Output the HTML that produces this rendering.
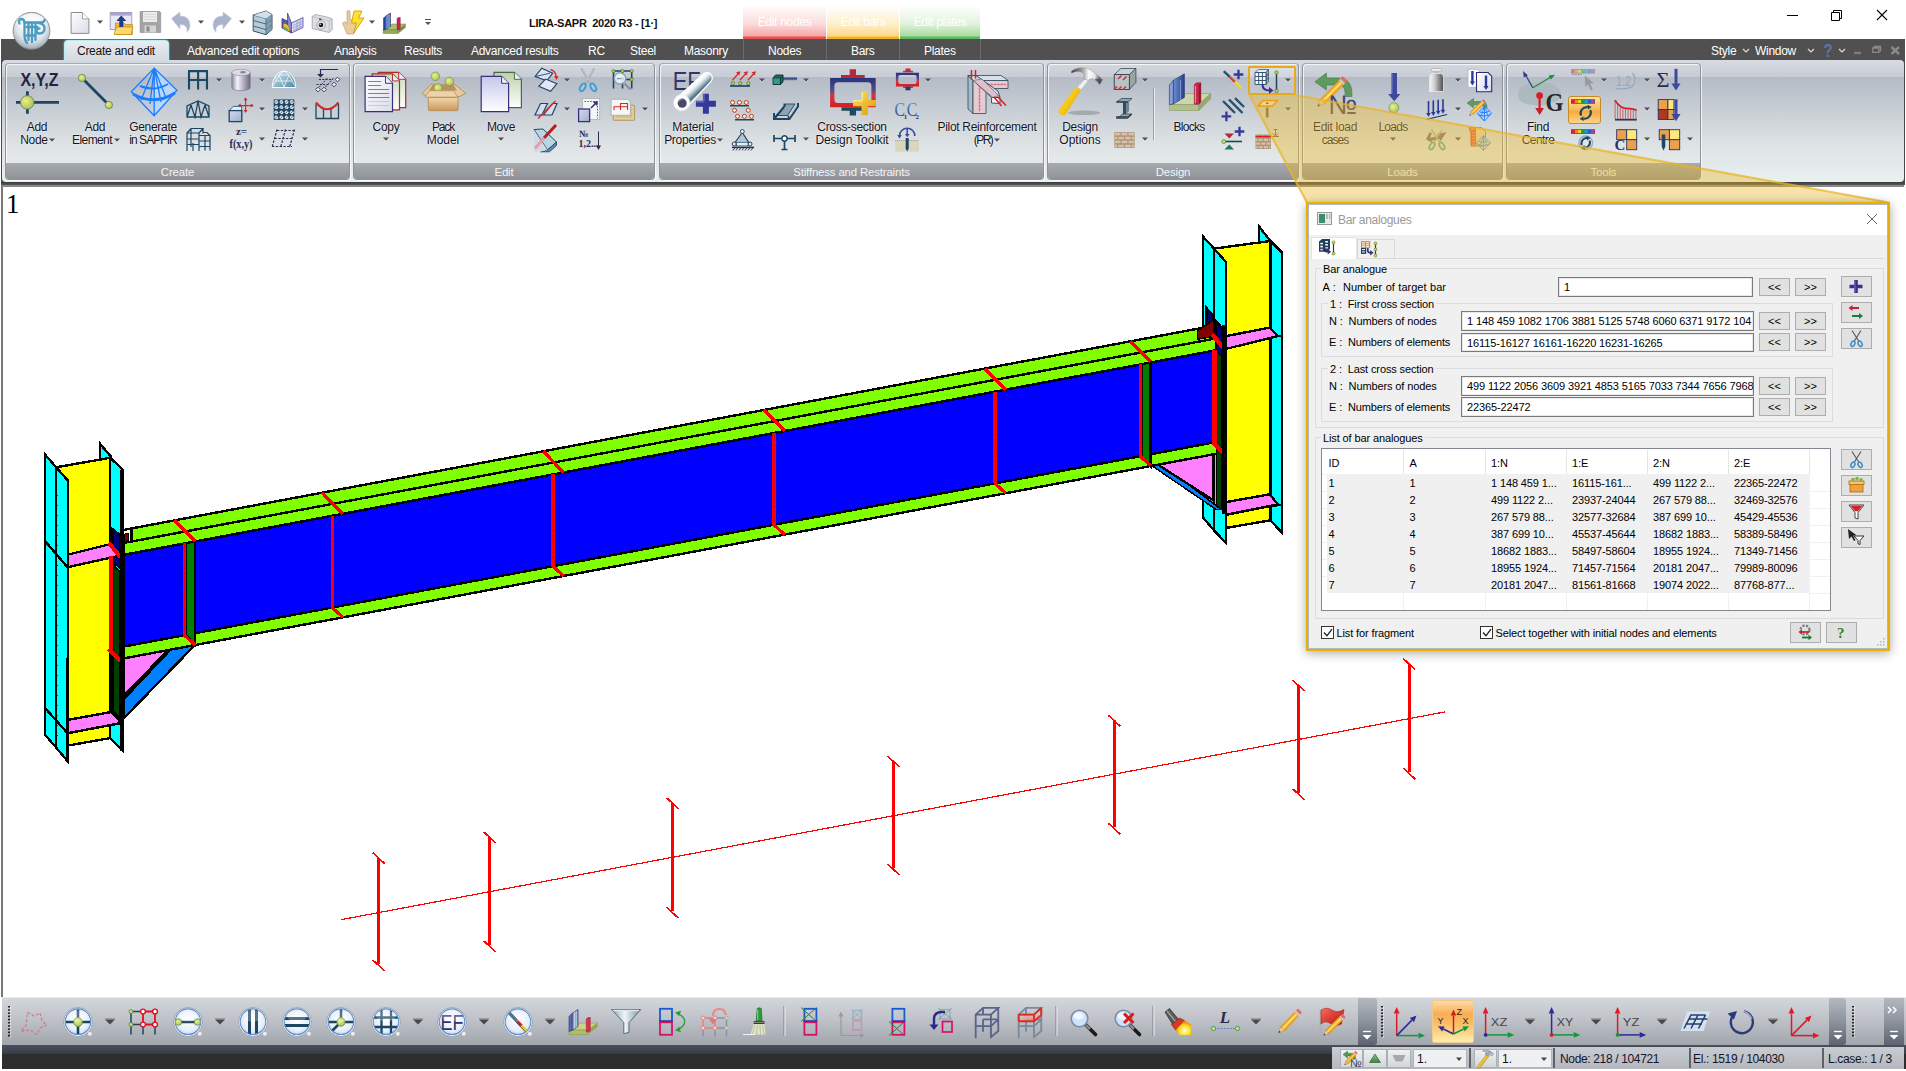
<!DOCTYPE html>
<html><head><meta charset="utf-8"><title>LIRA-SAPR 2020 R3 - [1]</title>
<style>
*{box-sizing:border-box;margin:0;padding:0}
html,body{width:1906px;height:1071px;overflow:hidden;background:#fff}
body{font-family:"Liberation Sans",sans-serif;font-size:12px;color:#1b1b1b}
#app{position:relative;width:1906px;height:1071px;overflow:hidden;background:#fff}
.abs{position:absolute}
svg{position:absolute;overflow:visible}
/* title */
#titlebar{position:absolute;left:0;top:0;width:1906px;height:39px;background:#fff}
#title{position:absolute;left:529px;top:16px;font-size:11px;font-weight:bold;letter-spacing:-0.25px;white-space:pre;color:#111;line-height:14px}
.ctx{position:absolute;top:5px;height:34px;color:#fff;font-size:12px;letter-spacing:-0.3px;text-align:center;line-height:34px;white-space:nowrap}
#tabbar{position:absolute;left:1px;top:39px;width:1904px;height:22px;background:#505050}
.tab{position:absolute;top:44.4px;height:14px;line-height:14px;font-size:12px;letter-spacing:-0.28px;color:#fff;white-space:nowrap}
#tabactive{position:absolute;left:64px;top:40px;width:105px;height:21px;border-radius:4px 4px 0 0;background:linear-gradient(#e9edf1,#d4d9df);border:1px solid #b9ecf5;border-bottom:none;box-shadow:0 0 2px #8fe0f0}
#ribbon{position:absolute;left:2px;top:60px;width:1902px;height:122px;border-radius:4px;background:linear-gradient(#d7dbe1 0px,#c7ccd5 17px,#b4bbc6 17px,#dfe3e5 86px,#e8f0f0 121px)}
#ribbonshadow{position:absolute;left:1px;top:182px;width:1904px;height:3px;background:linear-gradient(#3c3c3c,#555)}
.panel{position:absolute;top:63px;height:117px;border-radius:4px;border:1px solid #8e9399;border-top-color:#a6abb2;box-shadow:inset 1px 1px 0 rgba(255,255,255,.75),1px 1px 0 rgba(255,255,255,.7);overflow:hidden}
.plabel{position:absolute;left:0;right:0;bottom:0;height:16px;background:linear-gradient(#a7abb0,#8f9397);color:#f4f4f4;font-size:11.4px;letter-spacing:-0.15px;text-align:center;line-height:18px}
.rt{position:absolute;font-size:12px;letter-spacing:-0.3px;line-height:13px;text-align:center;white-space:nowrap;color:#14141e;transform:translateX(-50%);text-shadow:0 0 2px #fff}
.dd{position:absolute;width:0;height:0;border-left:3px solid transparent;border-right:3px solid transparent;border-top:3px solid #444}
#viewport{position:absolute;left:1px;top:185px;width:1903px;height:812px;background:#fff;border-left:2px solid #777;border-top:2px solid #8a8a8a}
#vpnum{position:absolute;left:6px;top:190px;font-family:"Liberation Serif",serif;font-size:27px;line-height:28px;color:#000}
/* dialog */
#dlg{position:absolute;left:1306px;top:202px;width:584px;height:449px;border:2px solid #e8b000;outline:0;background:#f0f0f0;box-shadow:0 2px 10px rgba(0,0,0,.35);font-size:11px;letter-spacing:-0.12px;color:#000}
#dlg .tb{position:absolute;left:0;top:0;width:578px;height:30px;background:#fff}
#dlg .lbl{position:absolute;white-space:pre;line-height:13px;height:13px}
#dlg .inp{position:absolute;background:#fff;border:1px solid #7a7a7a;line-height:18.5px;padding-left:5px;white-space:nowrap;overflow:hidden;box-shadow:inset 0 0 0 1px #e8e8e8}
#dlg .btn{position:absolute;background:#e1e1e1;border:1px solid #adadad;text-align:center;line-height:16px;letter-spacing:0}
#dlg .grp{position:absolute;border:1px solid #dcdcdc}
#dlg .gl{position:absolute;background:#f0f0f0;padding:0 2px;white-space:pre;line-height:13px}
#dlg .cell{position:absolute;white-space:nowrap;line-height:13px}
/* bottom */
#btb{position:absolute;left:2px;top:998px;width:1904px;height:47px;background:linear-gradient(#d3d6db,#bfc3c9 45%,#a1a5ac)}
#bband{position:absolute;left:2px;top:1045px;width:1904px;height:9px;background:linear-gradient(#4b505d,#383c46)}
#status{position:absolute;left:2px;top:1054px;width:1904px;height:15px;background:#2d2d2d}
.st{position:absolute;top:1049px;height:19px;background:linear-gradient(#d9dce0,#b9bdc3);font-size:12px;letter-spacing:-0.3px;line-height:19px;color:#111;white-space:nowrap}

#dlgin{position:absolute;left:0;top:0;width:580px;height:445px;border:1px solid #b4b6c4}

</style></head>
<body>
<div id="app">
<div id="titlebar"></div>
<div class="ctx" style="left:743px;width:83px;background:linear-gradient(rgba(255,255,255,0) 0%,#fbdcdc 55%,#f5a8a8 90%,#e84a4a 96%,#e84a4a 100%)">Edit nodes</div>
<div class="ctx" style="left:827px;width:72px;background:linear-gradient(rgba(255,255,255,0) 0%,#fef0cc 55%,#fbd88c 90%,#f0b020 96%,#f0b020 100%)">Edit bars</div>
<div class="ctx" style="left:900px;width:80px;background:linear-gradient(rgba(255,255,255,0) 0%,#e2f2de 55%,#aadba2 90%,#5cb85c 96%,#5cb85c 100%)">Edit plates</div>
<div id="title">LIRA-SAPR  2020 R3 - [1·]</div>
<div id="tabbar"></div>
<div class="abs" style="left:743px;top:39px;width:1px;height:21px;background:#6a6a6a"></div>
<div class="abs" style="left:826px;top:39px;width:1px;height:21px;background:#6a6a6a"></div>
<div class="abs" style="left:899px;top:39px;width:1px;height:21px;background:#6a6a6a"></div>
<div class="abs" style="left:980px;top:39px;width:1px;height:21px;background:#6a6a6a"></div>
<div class="abs" style="left:1px;top:60px;width:1904px;height:124px;background:#484848"></div><div id="ribbon"></div><div id="ribbonshadow"></div>
<div id="tabactive"></div>
<div class="tab" style="left:77px;color:#111">Create and edit</div>
<div class="tab" style="left:187px;color:#fff">Advanced edit options</div>
<div class="tab" style="left:334px;color:#fff">Analysis</div>
<div class="tab" style="left:404px;color:#fff">Results</div>
<div class="tab" style="left:471px;color:#fff">Advanced results</div>
<div class="tab" style="left:588px;color:#fff">RC</div>
<div class="tab" style="left:630px;color:#fff">Steel</div>
<div class="tab" style="left:684px;color:#fff">Masonry</div>
<div class="tab" style="left:768px;color:#fff">Nodes</div>
<div class="tab" style="left:851px;color:#fff">Bars</div>
<div class="tab" style="left:924px;color:#fff">Plates</div>
<div class="tab" style="left:1711px;color:#fff;top:44px">Style</div>
<div class="tab" style="left:1755px;color:#fff;top:44px">Window</div>
<div class="panel" style="left:5px;width:345px"><div class="plabel">Create</div></div>
<div class="panel" style="left:353px;width:302px"><div class="plabel">Edit</div></div>
<div class="panel" style="left:659px;width:385px"><div class="plabel">Stiffness and Restraints</div></div>
<div class="panel" style="left:1047px;width:252px"><div class="plabel">Design</div></div>
<div class="panel" style="left:1302px;width:201px"><div class="plabel">Loads</div></div>
<div class="panel" style="left:1506px;width:195px"><div class="plabel">Tools</div></div>
<div class="abs" style="left:1248px;top:65.5px;width:48px;height:29.5px;border:2px solid #e9a917;border-radius:2px;background:linear-gradient(rgba(255,255,255,.25),rgba(255,255,255,.05))"></div>
<div class="abs" style="left:1568px;top:96px;width:33px;height:28px;border:1px solid #c58a22;border-radius:3px;background:linear-gradient(#fde3a4,#f9b95a 50%,#f7a93c 55%,#fbd58a)"></div>
<div class="abs" style="left:1153px;top:88px;width:1px;height:52px;background:#9aa0a8;box-shadow:1px 0 0 rgba(255,255,255,.6)"></div>
<div class="rt" style="left:37px;top:120.5px">Add</div>
<div class="rt" style="left:34px;top:133.5px">Node</div>
<div class="rt" style="left:95px;top:120.5px">Add</div>
<div class="rt" style="left:92px;top:133.5px;letter-spacing:-0.6px">Element</div>
<div class="rt" style="left:153px;top:120.5px">Generate</div>
<div class="rt" style="left:153px;top:133.5px;letter-spacing:-0.95px">in SAPFIR</div>
<div class="rt" style="left:386px;top:120.5px">Copy</div>
<div class="rt" style="left:443px;top:120.5px;letter-spacing:-1.2px">Pack</div>
<div class="rt" style="left:443px;top:133.5px;letter-spacing:-0.05px">Model</div>
<div class="rt" style="left:501px;top:120.5px">Move</div>
<div class="rt" style="left:693px;top:120.5px;letter-spacing:-0.15px">Material</div>
<div class="rt" style="left:690px;top:133.5px">Properties</div>
<div class="rt" style="left:852px;top:120.5px">Cross-section</div>
<div class="rt" style="left:852px;top:133.5px;letter-spacing:-0.1px">Design Toolkit</div>
<div class="rt" style="left:987px;top:120.5px">Pilot Reinforcement</div>
<div class="rt" style="left:983px;top:133.5px;letter-spacing:-1.6px">(PR)</div>
<div class="rt" style="left:1080px;top:120.5px">Design</div>
<div class="rt" style="left:1080px;top:133.5px;letter-spacing:0px">Options</div>
<div class="rt" style="left:1189px;top:120.5px;letter-spacing:-0.7px">Blocks</div>
<div class="rt" style="left:1335px;top:120.5px">Edit load</div>
<div class="rt" style="left:1335px;top:133.5px;letter-spacing:-1.0px">cases</div>
<div class="rt" style="left:1393px;top:120.5px;letter-spacing:-0.7px">Loads</div>
<div class="rt" style="left:1538px;top:120.5px">Find</div>
<div class="rt" style="left:1538px;top:133.5px;letter-spacing:-0.55px">Centre</div>
<svg width="1906" height="190" style="left:0;top:0"><defs>
<radialGradient id="gnode" cx=".4" cy=".4" r=".7"><stop offset="0" stop-color="#eaf088"/><stop offset="1" stop-color="#a4bb58"/></radialGradient>
<linearGradient id="gcyl" x1="0" x2="1"><stop offset="0" stop-color="#8d8a9c"/><stop offset=".3" stop-color="#f4f4f8"/><stop offset=".6" stop-color="#b9b7c4"/><stop offset="1" stop-color="#6b6880"/></linearGradient>
<linearGradient id="gdome" x1="0" x2="1" y1="0" y2="1"><stop offset="0" stop-color="#d9edf5"/><stop offset="1" stop-color="#4d86a6"/></linearGradient>
<linearGradient id="gcube" x1="0" x2="1" y1="0" y2="1"><stop offset="0" stop-color="#d6d9f2"/><stop offset="1" stop-color="#9fb0c8"/></linearGradient>
<linearGradient id="gpaper" x1="0" x2="1" y1="0" y2="1"><stop offset="0" stop-color="#ffffff"/><stop offset="1" stop-color="#d9dcea"/></linearGradient>
<linearGradient id="gbox" x1="0" x2="0" y1="0" y2="1"><stop offset="0" stop-color="#f2d6a8"/><stop offset="1" stop-color="#c99a5c"/></linearGradient>
<linearGradient id="gsteel" x1="0" x2="1" y1="0" y2="1"><stop offset="0" stop-color="#f5f6f8"/><stop offset=".5" stop-color="#9aa1ad"/><stop offset="1" stop-color="#e4e6ea"/></linearGradient>
<linearGradient id="ggold" x1="0" x2="1" y1="0" y2="1"><stop offset="0" stop-color="#ffe35a"/><stop offset="1" stop-color="#d99a10"/></linearGradient>
<linearGradient id="gbluebar" x1="0" x2="1"><stop offset="0" stop-color="#6f8fd0"/><stop offset="1" stop-color="#24408a"/></linearGradient>
<linearGradient id="gredblue" x1="0" x2="0" y1="0" y2="1"><stop offset="0" stop-color="#d42a2a"/><stop offset=".5" stop-color="#7a3a6a"/><stop offset="1" stop-color="#1f3f8f"/></linearGradient>
<radialGradient id="gorb" cx=".5" cy=".35" r=".7"><stop offset="0" stop-color="#ffffff"/><stop offset=".6" stop-color="#dfe6ec"/><stop offset="1" stop-color="#8e9aa6"/></radialGradient>
<radialGradient id="glens" cx=".5" cy=".45" r=".6"><stop offset="0" stop-color="#ffffff"/><stop offset=".7" stop-color="#e6eef8"/><stop offset="1" stop-color="#b9cbe4"/></radialGradient>
<linearGradient id="gdarr" x1="0" x2="1"><stop offset="0" stop-color="#5f78c8"/><stop offset="1" stop-color="#1f2f7a"/></linearGradient>
<linearGradient id="ggreenarr" x1="0" x2="0" y1="0" y2="1"><stop offset="0" stop-color="#8fc08a"/><stop offset="1" stop-color="#3f7f4a"/></linearGradient>
<linearGradient id="gflag" x1="0" x2="1" y1="0" y2="1"><stop offset="0" stop-color="#ff6a5a"/><stop offset="1" stop-color="#b01010"/></linearGradient>
</defs>
<path d="M49 138.5h6l-3 3.2z" fill="#fff" opacity=".55" transform="translate(0,1)"/><path d="M49 138.5h6l-3 3.2z" fill="#505050"/>
<path d="M114 138.5h6l-3 3.2z" fill="#fff" opacity=".55" transform="translate(0,1)"/><path d="M114 138.5h6l-3 3.2z" fill="#505050"/>
<path d="M383 137.5h6l-3 3.2z" fill="#fff" opacity=".55" transform="translate(0,1)"/><path d="M383 137.5h6l-3 3.2z" fill="#505050"/>
<path d="M498 137.5h6l-3 3.2z" fill="#fff" opacity=".55" transform="translate(0,1)"/><path d="M498 137.5h6l-3 3.2z" fill="#505050"/>
<path d="M717 138.5h6l-3 3.2z" fill="#fff" opacity=".55" transform="translate(0,1)"/><path d="M717 138.5h6l-3 3.2z" fill="#505050"/>
<path d="M994 138.5h6l-3 3.2z" fill="#fff" opacity=".55" transform="translate(0,1)"/><path d="M994 138.5h6l-3 3.2z" fill="#505050"/>
<path d="M1390 137.5h6l-3 3.2z" fill="#fff" opacity=".55" transform="translate(0,1)"/><path d="M1390 137.5h6l-3 3.2z" fill="#505050"/>
<path d="M216 78.5h6l-3 3.2z" fill="#fff" opacity=".55" transform="translate(0,1)"/><path d="M216 78.5h6l-3 3.2z" fill="#505050"/>
<path d="M259 78.5h6l-3 3.2z" fill="#fff" opacity=".55" transform="translate(0,1)"/><path d="M259 78.5h6l-3 3.2z" fill="#505050"/>
<path d="M259 107.5h6l-3 3.2z" fill="#fff" opacity=".55" transform="translate(0,1)"/><path d="M259 107.5h6l-3 3.2z" fill="#505050"/>
<path d="M259 137.5h6l-3 3.2z" fill="#fff" opacity=".55" transform="translate(0,1)"/><path d="M259 137.5h6l-3 3.2z" fill="#505050"/>
<path d="M302 107.5h6l-3 3.2z" fill="#fff" opacity=".55" transform="translate(0,1)"/><path d="M302 107.5h6l-3 3.2z" fill="#505050"/>
<path d="M302 137.5h6l-3 3.2z" fill="#fff" opacity=".55" transform="translate(0,1)"/><path d="M302 137.5h6l-3 3.2z" fill="#505050"/>
<path d="M564 78.5h6l-3 3.2z" fill="#fff" opacity=".55" transform="translate(0,1)"/><path d="M564 78.5h6l-3 3.2z" fill="#505050"/>
<path d="M564 107.5h6l-3 3.2z" fill="#fff" opacity=".55" transform="translate(0,1)"/><path d="M564 107.5h6l-3 3.2z" fill="#505050"/>
<path d="M642 107.5h6l-3 3.2z" fill="#fff" opacity=".55" transform="translate(0,1)"/><path d="M642 107.5h6l-3 3.2z" fill="#505050"/>
<path d="M759 78.5h6l-3 3.2z" fill="#fff" opacity=".55" transform="translate(0,1)"/><path d="M759 78.5h6l-3 3.2z" fill="#505050"/>
<path d="M803 78.5h6l-3 3.2z" fill="#fff" opacity=".55" transform="translate(0,1)"/><path d="M803 78.5h6l-3 3.2z" fill="#505050"/>
<path d="M803 137.5h6l-3 3.2z" fill="#fff" opacity=".55" transform="translate(0,1)"/><path d="M803 137.5h6l-3 3.2z" fill="#505050"/>
<path d="M925 78.5h6l-3 3.2z" fill="#fff" opacity=".55" transform="translate(0,1)"/><path d="M925 78.5h6l-3 3.2z" fill="#505050"/>
<path d="M1142 78.5h6l-3 3.2z" fill="#fff" opacity=".55" transform="translate(0,1)"/><path d="M1142 78.5h6l-3 3.2z" fill="#505050"/>
<path d="M1142 137.5h6l-3 3.2z" fill="#fff" opacity=".55" transform="translate(0,1)"/><path d="M1142 137.5h6l-3 3.2z" fill="#505050"/>
<path d="M1285 78.5h6l-3 3.2z" fill="#fff" opacity=".55" transform="translate(0,1)"/><path d="M1285 78.5h6l-3 3.2z" fill="#505050"/>
<path d="M1285 107.5h6l-3 3.2z" fill="#fff" opacity=".55" transform="translate(0,1)"/><path d="M1285 107.5h6l-3 3.2z" fill="#505050"/>
<path d="M1455 78.5h6l-3 3.2z" fill="#fff" opacity=".55" transform="translate(0,1)"/><path d="M1455 78.5h6l-3 3.2z" fill="#505050"/>
<path d="M1455 107.5h6l-3 3.2z" fill="#fff" opacity=".55" transform="translate(0,1)"/><path d="M1455 107.5h6l-3 3.2z" fill="#505050"/>
<path d="M1455 137.5h6l-3 3.2z" fill="#fff" opacity=".55" transform="translate(0,1)"/><path d="M1455 137.5h6l-3 3.2z" fill="#505050"/>
<path d="M1601 78.5h6l-3 3.2z" fill="#fff" opacity=".55" transform="translate(0,1)"/><path d="M1601 78.5h6l-3 3.2z" fill="#505050"/>
<path d="M1644 78.5h6l-3 3.2z" fill="#fff" opacity=".55" transform="translate(0,1)"/><path d="M1644 78.5h6l-3 3.2z" fill="#505050"/>
<path d="M1644 107.5h6l-3 3.2z" fill="#fff" opacity=".55" transform="translate(0,1)"/><path d="M1644 107.5h6l-3 3.2z" fill="#505050"/>
<path d="M1644 137.5h6l-3 3.2z" fill="#fff" opacity=".55" transform="translate(0,1)"/><path d="M1644 137.5h6l-3 3.2z" fill="#505050"/>
<path d="M1687 137.5h6l-3 3.2z" fill="#fff" opacity=".55" transform="translate(0,1)"/><path d="M1687 137.5h6l-3 3.2z" fill="#505050"/>
<path d="M97 20.5h6l-3 3.2z" fill="#fff" opacity=".55" transform="translate(0,1)"/><path d="M97 20.5h6l-3 3.2z" fill="#505050"/>
<path d="M198 20.5h6l-3 3.2z" fill="#fff" opacity=".55" transform="translate(0,1)"/><path d="M198 20.5h6l-3 3.2z" fill="#505050"/>
<path d="M239 20.5h6l-3 3.2z" fill="#fff" opacity=".55" transform="translate(0,1)"/><path d="M239 20.5h6l-3 3.2z" fill="#505050"/>
<path d="M369 20.5h6l-3 3.2z" fill="#fff" opacity=".55" transform="translate(0,1)"/><path d="M369 20.5h6l-3 3.2z" fill="#505050"/>
<path d="M1743 49l3 3l3-3" fill="none" stroke="#ddd" stroke-width="1.2"/>
<path d="M1808 49l3 3l3-3" fill="none" stroke="#ddd" stroke-width="1.2"/>
<path d="M1839 49l3 3l3-3" fill="none" stroke="#ddd" stroke-width="1.2"/>
<path d="M1787 15.5h11" stroke="#000" stroke-width="1"/>
<path d="M1831.5 12.5h8v8h-8z M1833.5 12.5v-2h8v8h-2" fill="none" stroke="#000" stroke-width="1"/>
<path d="M1877 10l10 10M1887 10l-10 10" stroke="#000" stroke-width="1.1"/>
<path d="M1854 53h7" stroke="#7d7d7d" stroke-width="2.4"/><path d="M1872.8 48h6v4.300h-6z M1874.5 48v-1.500h6v4.300h-1.700" fill="none" stroke="#8a8a8a" stroke-width="1.300"/><path d="M1891.5 47l7.500 7M1899 47l-7.500 7" stroke="#8a8a8a" stroke-width="2.400"/>
<text x="1823.5" y="56.5" font-family="Liberation Sans,sans-serif" font-size="18" font-weight="bold" fill="#6272aa" textLength="9" lengthAdjust="spacingAndGlyphs">?</text>
<path d="M425 19.5h6" stroke="#555" stroke-width="1"/><path d="M425 22h6l-3 3z" fill="#555"/>
<g transform="translate(198,80)"><path d="M-10 -8.9h20M-9 0h18M-9 -8.9v18.5M0.1 -8.9v18.5M9 -8.9v18.5" fill="none" stroke="#1d4663" stroke-width="2.1"/></g>
<g transform="translate(198,109)"><path d="M-11 8v-11l11-5l11 5v11zM-11 8l4-12l4 12l3-16l3 16l4-12l4 12" fill="none" stroke="#1d4663" stroke-width="1.3"/></g>
<g transform="translate(198,139)"><path d="M-11 12v-18h12v18M-11 -6l4-4.5h12l-4 4.5M5 -10.5v5M-11 0h12M-11 5.5h12M-7 -10v18M-5 12v-8M1 -3.5h11v15M1 2h11M1 7.5h11M7 -3.5v15M12 -3.5l-3-3h-4" fill="none" stroke="#1d4663" stroke-width="1.2"/></g>
<g transform="translate(241,80)"><path d="M-9.2 -7.5v15a9.2 3.2 0 0 0 18.4 0v-15z" fill="url(#gcyl)" stroke="#6b6880" stroke-width=".5"/><ellipse cx="0" cy="-7.5" rx="9.2" ry="3.2" fill="#dddbe6" stroke="#8d8a9c" stroke-width=".6"/><ellipse cx="2" cy="-7.8" rx="3" ry="1.2" fill="#8a879a"/></g>
<g transform="translate(241,109)"><path d="M4.6 -10.4v13M-2 -3.4h13.5" stroke="#d42a2a" stroke-width="1.2"/><path d="M4.6 -11.8l-2 3h4zM4.6 4l-2-3h4zM-3.3 -3.4l3-2v4zM12.8 -3.4l-3-2v4z" fill="#d42a2a"/><path d="M-11.8 1.6l4-4.2h8.5l-.2 10l-3.8 4.2z" fill="#e8eaf6" stroke="#1d4663" stroke-width=".8"/><rect x="-11.8" y="1.6" width="12.6" height="11" fill="url(#gcube)" stroke="#1d4663" stroke-width="1.3"/></g>
<g transform="translate(241,139)"><text x="0.5" y="-3.6" text-anchor="middle" font-family="Liberation Serif,serif" font-weight="bold" font-size="11" fill="#2b2b55">z=</text><text x="0" y="8.6" text-anchor="middle" font-family="Liberation Serif,serif" font-weight="bold" font-size="13.5" textLength="23" lengthAdjust="spacingAndGlyphs" fill="#2b2b55">f(x,y)</text></g>
<g transform="translate(284,80)"><path d="M-11.8 7.5a11.8 16.5 0 0 1 23.6 0z" fill="url(#gdome)" stroke="#fff" stroke-width="1"/><path d="M-11 6l6-11l5 12l5-12l6 11M-5 -5h10M0 -9l-5 4M0 -9l5 4M-8 1h16" fill="none" stroke="#fff" stroke-width=".8" opacity=".9"/></g>
<g transform="translate(284,109)"><rect x="-10.3" y="-9.6" width="20.6" height="20.6" fill="#1d4663"/><circle cx="-7.70" cy="-7.00" r="1.9" fill="#dfe6ee"/><path d="M-9.00 -5.70l2.6-2.6" stroke="#1d4663" stroke-width=".7"/><circle cx="-7.70" cy="-1.85" r="1.9" fill="#dfe6ee"/><path d="M-9.00 -0.55l2.6-2.6" stroke="#1d4663" stroke-width=".7"/><circle cx="-7.70" cy="3.30" r="1.9" fill="#dfe6ee"/><path d="M-9.00 4.60l2.6-2.6" stroke="#1d4663" stroke-width=".7"/><circle cx="-7.70" cy="8.45" r="1.9" fill="#dfe6ee"/><path d="M-9.00 9.75l2.6-2.6" stroke="#1d4663" stroke-width=".7"/><circle cx="-2.55" cy="-7.00" r="1.9" fill="#dfe6ee"/><path d="M-3.85 -5.70l2.6-2.6" stroke="#1d4663" stroke-width=".7"/><circle cx="-2.55" cy="-1.85" r="1.9" fill="#dfe6ee"/><path d="M-3.85 -0.55l2.6-2.6" stroke="#1d4663" stroke-width=".7"/><circle cx="-2.55" cy="3.30" r="1.9" fill="#dfe6ee"/><path d="M-3.85 4.60l2.6-2.6" stroke="#1d4663" stroke-width=".7"/><circle cx="-2.55" cy="8.45" r="1.9" fill="#dfe6ee"/><path d="M-3.85 9.75l2.6-2.6" stroke="#1d4663" stroke-width=".7"/><circle cx="2.60" cy="-7.00" r="1.9" fill="#dfe6ee"/><path d="M1.30 -5.70l2.6-2.6" stroke="#1d4663" stroke-width=".7"/><circle cx="2.60" cy="-1.85" r="1.9" fill="#dfe6ee"/><path d="M1.30 -0.55l2.6-2.6" stroke="#1d4663" stroke-width=".7"/><circle cx="2.60" cy="3.30" r="1.9" fill="#dfe6ee"/><path d="M1.30 4.60l2.6-2.6" stroke="#1d4663" stroke-width=".7"/><circle cx="2.60" cy="8.45" r="1.9" fill="#dfe6ee"/><path d="M1.30 9.75l2.6-2.6" stroke="#1d4663" stroke-width=".7"/><circle cx="7.75" cy="-7.00" r="1.9" fill="#dfe6ee"/><path d="M6.45 -5.70l2.6-2.6" stroke="#1d4663" stroke-width=".7"/><circle cx="7.75" cy="-1.85" r="1.9" fill="#dfe6ee"/><path d="M6.45 -0.55l2.6-2.6" stroke="#1d4663" stroke-width=".7"/><circle cx="7.75" cy="3.30" r="1.9" fill="#dfe6ee"/><path d="M6.45 4.60l2.6-2.6" stroke="#1d4663" stroke-width=".7"/><circle cx="7.75" cy="8.45" r="1.9" fill="#dfe6ee"/><path d="M6.45 9.75l2.6-2.6" stroke="#1d4663" stroke-width=".7"/></g>
<g transform="translate(284,139)"><path d="M-7 -8.5h18M-9.5 -0.5h19M-12 7.5h20M-7 -9.5l-5 18M1.5 -9.5l-5 18M10.5 -9.5l-5 18" fill="none" stroke="#2b2b55" stroke-width="1.2" stroke-dasharray="2.4 1.4"/></g>
<g transform="translate(327,80)"><path d="M11 -10.5h-17.5v5" fill="none" stroke="#2b2b55" stroke-width="1.2"/><path d="M-10 -6h7l-3.5 3.5z" fill="#2b2b55"/><path d="M-8 -0.5h14M-10.5 4.5h13M-10 9.5l11-12M-4 9.5l11-12" stroke="#2b2b55" stroke-width="1" stroke-dasharray="2 1.3" fill="none"/><path d="M10.5 -2.8l2.3 2.3l-2.3 2.3l-2.3-2.3z" fill="#f4f4f8" stroke="#2b2b55" stroke-width=".9"/><path d="M7 2.2l2.3 2.3l-2.3 2.3l-2.3-2.3z" fill="#f4f4f8" stroke="#2b2b55" stroke-width=".9"/><path d="M-9 7.2l2.3 2.3l-2.3 2.3l-2.3-2.3z" fill="#f4f4f8" stroke="#2b2b55" stroke-width=".9"/><path d="M-3 7.2l2.3 2.3l-2.3 2.3l-2.3-2.3z" fill="#f4f4f8" stroke="#2b2b55" stroke-width=".9"/></g>
<g transform="translate(327,109)"><path d="M-11 -5.5v15h22.5v-15M-3.5 -1v10.5M4 -1v10.5" fill="none" stroke="#1d4663" stroke-width="1.3"/><path d="M-11 -6.5Q0 7 11.5 -6.5" fill="none" stroke="#d42a2a" stroke-width="2.2"/></g>
<g transform="translate(546,80)"><path d="M-11 -3.4l6.8-8.4l10.9 5l-5.9 7.6z" fill="#dde3f4" stroke="#1d4663" stroke-width="1.1"/><path d="M-10 -3.6l14-3.2" stroke="#1d4663" stroke-width=".9"/><path d="M-7.2 6.3l6.7-7.2l11.4 4.6l-6.3 7.6z" fill="#e4e6f6" stroke="#1d4663" stroke-width="1.1"/><path d="M4.6 -10.5Q10 -9 10.3 -2.5" fill="none" stroke="#d42a2a" stroke-width="1.3"/><path d="M10.5 0l-2.5-4h4.5z" fill="#d42a2a"/></g>
<g transform="translate(546,109)"><path d="M-11 6l5.5-11.5h7l-5.5 11.5zM-2.5 6l9-11.5h4.5l-5 11.5z" fill="#d5def0" stroke="#1d4663" stroke-width="1.2"/><path d="M-8 9.5L9.5 -8" stroke="#d42a2a" stroke-width="1.4"/></g>
<g transform="translate(546,139)"><path d="M-12 -9.5l9-.5l13.5 13l-9 8z" fill="#b6d6e2" stroke="#1d4663" stroke-width="1"/><path d="M1.5 11l9-8v3.5l-7 6.3h-9z" fill="#5f87a8" stroke="#1d4663" stroke-width=".8"/><path d="M-12 -9l13.5 20l-7 1.8h-6.5z" fill="#cfd6ea" opacity=".85"/><path d="M10 -14l-12 13" stroke="#b81e1e" stroke-width="3"/><path d="M-2 -1l-9 10.5" stroke="#e6a0a8" stroke-width="3"/></g>
<g transform="translate(588,80)"><path d="M-6.5 -11.5L3 4.5M6 -11.5L-3 4.5" stroke="#9a9a9a" stroke-width="1.6" fill="none"/><path d="M-6 -11L3 4M5.5 -11L-3 4" stroke="#e9e9e9" stroke-width=".6" fill="none"/><ellipse cx="-5.3" cy="7.3" rx="2.3" ry="4.2" transform="rotate(30 -5.3 7.3)" fill="none" stroke="#3a9fd6" stroke-width="1.9"/><ellipse cx="5.3" cy="7.3" rx="2.3" ry="4.2" transform="rotate(-30 5.3 7.3)" fill="none" stroke="#3a9fd6" stroke-width="1.9"/></g>
<g transform="translate(588,109)"><rect x="-5.5" y="-10.5" width="17.2" height="21" fill="#f4f5f7" stroke="#b0b0b0" stroke-width=".8"/><path d="M-3.5 -7.5h13v17" fill="none" stroke="#555" stroke-width=".9" stroke-dasharray="1.6 1.3"/><path d="M3 -1l5.5-5.5" stroke="#3b2f7c" stroke-width="1.6"/><path d="M9.8 -8l-5 .8l4.2 4.2z" fill="#3b2f7c"/><rect x="-9.4" y="0" width="11" height="12.6" fill="url(#gcube)" stroke="#3b2f7c" stroke-width="1.3"/></g>
<g transform="translate(588,139)"><text x="-9" y="-2.5" font-family="Liberation Serif,serif" font-weight="bold" font-size="9.5" fill="#2b2b55">№</text><text x="-9.5" y="7.5" font-family="Liberation Serif,serif" font-weight="bold" font-size="10" fill="#2b2b55">1,2...</text><path d="M10.5 -7.5v16" stroke="#2b2b55" stroke-width="1"/><path d="M8 6.5h5l-2.5 4.5z" fill="#2b2b55"/></g>
<g transform="translate(623,80)"><path d="M-9.5 -9h18.2M-9.5 -0.5h18.2M-9.5 -9v17.5M-0.5 -9v17.5M8.7 -9v17.5" fill="none" stroke="#1d4663" stroke-width="1.6"/><circle cx="-9.5" cy="-9" r="1.6" fill="#b8d24a" stroke="#4a6a1e" stroke-width=".6"/><circle cx="-0.5" cy="-9" r="1.6" fill="#b8d24a" stroke="#4a6a1e" stroke-width=".6"/><circle cx="8.7" cy="-9" r="1.6" fill="#b8d24a" stroke="#4a6a1e" stroke-width=".6"/><circle cx="8.7" cy="-0.5" r="1.6" fill="#b8d24a" stroke="#4a6a1e" stroke-width=".6"/><path d="M1.5 3.5l6 6" stroke="#8a9098" stroke-width="2.2"/><circle cx="-3" cy="-1.5" r="5.8" fill="url(#glens)" stroke="#8da0b8" stroke-width="1.4" opacity=".92"/><path d="M-6 -1.5h6" stroke="#6d8cab" stroke-width="1.2"/><circle cx="-0.5" cy="-1.5" r="1.5" fill="#cfe08a"/></g>
<g transform="translate(623,109)"><rect x="-9.8" y="-3.8" width="21.4" height="15.1" rx="1" fill="#d6c08a" stroke="#b09a5c" stroke-width="1"/><rect x="-8.3" y="-2.3" width="18.4" height="12" fill="none" stroke="#ead9ae" stroke-width="1"/><path d="M-11.9 -9.7h16.5l2.8 2.8v13.2h-19.3z" fill="#f6f6f6" stroke="#a8a8a8" stroke-width=".8"/><path d="M-9 1v-3.2h13.5v3.2M-2.5 1v-6.5h7v6.5M-2.5 -5.5h7" fill="none" stroke="#d42a2a" stroke-width="1.1"/></g>
<g transform="translate(741,80)"><path d="M-8.5 0l6.5-7" stroke="#d42a2a" stroke-width="1.3"/><path d="M-0.5 -8.8l-4.5 1l3.3 3.2z" fill="#d42a2a"/><circle cx="-8.2" cy="3.2" r="1.7" fill="#b8d24a" stroke="#3a7a3a" stroke-width=".7"/><path d="M-1 0l6.5-7" stroke="#d42a2a" stroke-width="1.3"/><path d="M7 -8.8l-4.5 1l3.3 3.2z" fill="#d42a2a"/><circle cx="-0.7" cy="3.2" r="1.7" fill="#b8d24a" stroke="#3a7a3a" stroke-width=".7"/><path d="M7 0l6.5-7" stroke="#d42a2a" stroke-width="1.3"/><path d="M15 -8.8l-4.5 1l3.3 3.2z" fill="#d42a2a"/><circle cx="7.3" cy="3.2" r="1.7" fill="#b8d24a" stroke="#3a7a3a" stroke-width=".7"/><path d="M-11 6h20" stroke="#1d4663" stroke-width="1.7"/></g>
<g transform="translate(741,109)"><circle cx="-8.5" cy="-6.5" r="2" fill="#fbeee0" stroke="#b8401e" stroke-width="1"/><circle cx="-1.5" cy="-6.5" r="2" fill="#fbeee0" stroke="#b8401e" stroke-width="1"/><circle cx="5.3" cy="-6.5" r="2" fill="#fbeee0" stroke="#b8401e" stroke-width="1"/><circle cx="-6.5" cy="1.3" r="2" fill="#fbeee0" stroke="#b8401e" stroke-width="1"/><circle cx="7.3" cy="1.3" r="2" fill="#fbeee0" stroke="#b8401e" stroke-width="1"/><circle cx="-3.5" cy="7.3" r="2" fill="#fbeee0" stroke="#b8401e" stroke-width="1"/><circle cx="3.4" cy="7.3" r="2" fill="#fbeee0" stroke="#b8401e" stroke-width="1"/><circle cx="10.4" cy="7.3" r="2" fill="#fbeee0" stroke="#b8401e" stroke-width="1"/><path d="M-11 -3.3h19M-6 10.8h19" stroke="#1d4663" stroke-width="1.5"/></g>
<g transform="translate(741,139)"><path d="M-7.5 5.5L1.3 -6.5L9 5.5z" fill="#b9c4cf" stroke="#1d4663" stroke-width="1.2"/><circle cx="1.3" cy="-7.5" r="1.9" fill="#fff" stroke="#1d4663" stroke-width="1"/><circle cx="-6.8" cy="5" r="2" fill="#e6eef6" stroke="#1d4663" stroke-width="1"/><circle cx="9" cy="5" r="2" fill="#e6eef6" stroke="#1d4663" stroke-width="1"/><rect x="-4.5" y="3.3" width="11.5" height="3.6" fill="#e6eef6" stroke="#1d4663" stroke-width=".7"/><path d="M-9 8.4h22" stroke="#2b2b55" stroke-width="1.5"/><path d="M-8 11.5l2-3M-5 11.5l2-3M-2 11.5l2-3M1 11.5l2-3M4 11.5l2-3M7 11.5l2-3M10 11.5l2-3" stroke="#2b2b55" stroke-width=".9"/></g>
<g transform="translate(784,80)"><path d="M-2 -1.2h15" stroke="#2b3a7a" stroke-width="2.6"/><path d="M-2 -0.8h15" stroke="#8a9ad0" stroke-width=".7"/><path d="M-11 -2l2.5-3h7.5v7l-2.5 2.5h-7.5z" fill="#1f6a66" stroke="#0f2f2f" stroke-width=".9"/><path d="M-11 -2h7.5v6.5M-3.5 -2l2.5-3" fill="none" stroke="#0f2f2f" stroke-width=".8"/><rect x="-10.5" y="-1.5" width="6.5" height="5.5" fill="#2f9a92"/></g>
<g transform="translate(784,109)"><path d="M-8 6.5l10-11.5h9l-7.5 11.5z" fill="#8ea4b0" stroke="#1d4663" stroke-width=".9"/><path d="M-10 4v6h15.5l8.5-12.5v-3.5M0.5 -5.5v3.5M-10 10l10-12" fill="none" stroke="#1d4663" stroke-width="2"/><path d="M4.5 9.5v-3" stroke="#1d4663" stroke-width="1.6"/></g>
<g transform="translate(784,139)"><path d="M-10 -0.5h21M-10 -4v7M11 -4v7M0.5 2v8.5M-2.5 10.5h6" fill="none" stroke="#1d4663" stroke-width="1.7"/><circle cx="0.5" cy="-0.5" r="2.7" fill="#fff" stroke="#1d4663" stroke-width="1.5"/></g>
<g transform="translate(907,80)"><path d="M-1.5 -11.5h5v3.5h-5z" fill="#c8283a"/><path d="M-1.5 6.5h5v3.8h-5z" fill="#2b3a6a"/><path d="M-4 6.5h10v1.2h-10z" fill="#2b3a6a"/><path d="M-4 -9.2h10v1.5h-10z" fill="#c8283a"/><defs><linearGradient id="gr23" x1="0" x2="0" y1="0" y2="1"><stop offset="0" stop-color="#24347c"/><stop offset=".45" stop-color="#5a4a8a"/><stop offset=".55" stop-color="#c83a4a"/><stop offset="1" stop-color="#d81e1e"/></linearGradient></defs><path fill-rule="evenodd" d="M-11.1 -7.3h23.1v13.8h-23.1zM-6.699999999999999 -4.9h14.3a2 2 0 0 1 2 2v5.0a2 2 0 0 1 -2 2h-14.3a2 2 0 0 1 -2 -2v-5.0a2 2 0 0 1 2 -2z" fill="url(#gr23)"/></g>
<g transform="translate(907,109)"><defs><linearGradient id="gcc" x1="0" x2="0" y1="0" y2="1"><stop offset="0" stop-color="#5aa8cc"/><stop offset="1" stop-color="#2a3478"/></linearGradient></defs><text x="-12.6" y="6.5" font-family="Liberation Serif,serif" font-size="19" fill="url(#gcc)" textLength="10.5" lengthAdjust="spacingAndGlyphs">C</text><text x="-0.2" y="6.5" font-family="Liberation Serif,serif" font-size="19" fill="url(#gcc)" textLength="10.5" lengthAdjust="spacingAndGlyphs">C</text><text x="-3.3" y="10" font-family="Liberation Serif,serif" font-weight="bold" font-size="7" fill="#2a3478">1</text><text x="8.5" y="10" font-family="Liberation Serif,serif" font-weight="bold" font-size="7" fill="#2a3478">2</text></g>
<g transform="translate(907,139)"><rect x="-11.7" y="1.2" width="23.7" height="11.5" fill="#d9d6c0"/><path d="M-11.7 1.6h23.7" stroke="#8a8a7a" stroke-width=".8" stroke-dasharray="1 1"/><path d="M-1.3 -1h3v10.5l-1.5 3l-1.5-3z" fill="#1d4663"/><path d="M-7.5 -3a7.7 7.7 0 0 1 15.4 0" fill="none" stroke="#3a4a9a" stroke-width="1.6"/><path d="M-9.8 -4l2.3 3.5l2.3-3.5z" fill="#3a4a9a"/><path d="M0.2 -11v7" stroke="#3a4a9a" stroke-width="1.5"/><path d="M-2.2 -5l2.4 3.2l2.4-3.2z" fill="#3a4a9a"/></g>
<g transform="translate(1124,80)"><path d="M-9.7 -5.5l6.6-6h15.1l-6.5 6z" fill="#c9d2cf" stroke="#3a4a5a" stroke-width=".8"/><path d="M5.4 -5.5l6.5-6v14l-6.5 7z" fill="#98a5a2" stroke="#3a4a5a" stroke-width=".8"/><rect x="-9.7" y="-5.5" width="15.1" height="15" fill="#b8c4c0" stroke="#3a4a5a" stroke-width="1"/><path d="M-6 -1l3.5-3.5M-1 0l3.500-3.500M-10 9.500l3-3M-5.500 9.500l3-3M-1 9.500l3-3" stroke="#e0284a" stroke-width="1.600"/></g>
<g transform="translate(1124,109)"><path d="M-7.5 -7l5-3.500h10.500l-4 3.500zM-5 8l3.500-3h9.500l-4.500 4.500h-11z" fill="#8fa6b4" stroke="#2a3a4a" stroke-width=".700"/><path d="M-1 -7h3.500v12h-3.500z" fill="#3a4a5a"/><path d="M2.500 -7l2.500-2v11l-2.500 3z" fill="#6a8494"/><path d="M-8 8h12.500l3-3" stroke="#2a3a4a" stroke-width="1.600" fill="none"/><path d="M-7.500 -7h11.500" stroke="#2a3a4a" stroke-width="1.300"/></g>
<g transform="translate(1124,139)"><rect x="-9.7" y="-6.8" width="20.3" height="15.7" fill="#a8957a"/><rect x="-9.1" y="-6.1" width="5.6" height="2.5" fill="#d6c19e"/><rect x="-2.3" y="-6.1" width="5.6" height="2.5" fill="#e4bcb2"/><rect x="4.4" y="-6.1" width="5.6" height="2.5" fill="#d6c19e"/><rect x="-9.1" y="-2.2" width="2.2" height="2.5" fill="#e4bcb2"/><rect x="-5.7" y="-2.2" width="5.6" height="2.5" fill="#d6c19e"/><rect x="1.1" y="-2.2" width="5.6" height="2.5" fill="#e4bcb2"/><rect x="7.8" y="-2.2" width="2.2" height="2.5" fill="#d6c19e"/><rect x="-9.1" y="1.7" width="5.6" height="2.5" fill="#d6c19e"/><rect x="-2.3" y="1.7" width="5.6" height="2.5" fill="#e4bcb2"/><rect x="4.4" y="1.7" width="5.6" height="2.5" fill="#d6c19e"/><rect x="-9.1" y="5.7" width="2.2" height="2.5" fill="#e4bcb2"/><rect x="-5.7" y="5.7" width="5.6" height="2.5" fill="#d6c19e"/><rect x="1.1" y="5.7" width="5.6" height="2.5" fill="#e4bcb2"/><rect x="7.8" y="5.7" width="2.2" height="2.5" fill="#d6c19e"/></g>
<g transform="translate(1232,80)"><path d="M-8.200 -8.800L-2 -3" stroke="#1d4663" stroke-width="2.400"/><path d="M-2 -3L3 2" stroke="#d42a2a" stroke-width="2.400"/><path d="M3 2L9.500 8.300" stroke="#f0d020" stroke-width="2.600"/><path d="M-8.200 -9.600L9.500 7.500" stroke="#fff" stroke-width=".500" opacity=".500"/><path d="M6.5 -10.3v9.6M1.7000000000000002 -5.5h9.6" stroke="#33389a" stroke-width="2.3"/></g>
<g transform="translate(1232,109)"><path d="M-9 -8l12 12M-3 -9.500l13.500 13.500M3 -11l9 9" stroke="#1d4663" stroke-width="2.300"/><path d="M-9 -8l12 12M-3 -9.500l13.500 13.500M3 -11l9 9" stroke="#5a8aa8" stroke-width=".600" stroke-dasharray="1 1"/><path d="M-5.6 2.6000000000000005v9.6M-10.399999999999999 7.4h9.6" stroke="#33389a" stroke-width="2.3"/></g>
<g transform="translate(1232,139)"><path d="M-8 2.500h18" stroke="#1d4663" stroke-width="1.600"/><circle cx="-8.200" cy="2.500" r="2" fill="#c8dc6a" stroke="#4a7a3a" stroke-width=".700"/><path d="M-7.500 -5.500h9.500l-4.700 5z" fill="#b8283a"/><path d="M-7.500 10.500h9.500l-4.700-5z" fill="#1f7a5a"/><path d="M7.5 -12.3v9.6M2.7 -7.5h9.6" stroke="#33389a" stroke-width="2.3"/></g>
<g transform="translate(1268,80)"><path d="M-13 -7.500l3.500-3h10l-2.500 3z" fill="#e8eef4" stroke="#2b4a66" stroke-width=".700"/><path d="M-2 -7.500l2.500-3v12l-2.500 3z" fill="#9ab0c4" stroke="#2b4a66" stroke-width=".700"/><path d="M-13 -7.500h11v12h-11zM-13 -3.500h11M-13 0.500h11M-9.300 -7.500v12M-5.600 -7.500v12M-2 -3.500l2.500-3M-2 0.500l2.500-3" fill="#f4f7fa" stroke="#2b4a66" stroke-width=".900"/><path d="M-5.500 4.500Q-5.500 10.500 2 10.500" fill="none" stroke="#3b2f8c" stroke-width="2"/><path d="M5.500 10.500l-4.500-3.500v7z" fill="#3b2f8c"/><path d="M8.500 -6.500v17" stroke="#1d4663" stroke-width="1.500"/><circle cx="8.500" cy="-7.500" r="1.700" fill="#b8d24a" stroke="#4a6a1e" stroke-width=".600"/><circle cx="8.500" cy="11" r="1.700" fill="#b8d24a" stroke="#4a6a1e" stroke-width=".600"/></g>
<g transform="translate(1268,109)"><path d="M-10 -3l5-5.500h14.500l-5 5.500z" fill="#f4e4c0" stroke="#f08a10" stroke-width="1.500"/><rect x="-2" y="-6.500" width="2.500" height="1.500" fill="#555"/><path d="M-0.800 -1.500v10" stroke="#7a6a3a" stroke-width="2.600"/></g>
<g transform="translate(1266,139)"><rect x="-10.5" y="-4.5" width="15.5" height="14.5" fill="#a8957a"/><rect x="-9.9" y="-3.8" width="4.0" height="2.2" fill="#d6c19e"/><rect x="-4.7" y="-3.8" width="4.0" height="2.2" fill="#e4bcb2"/><rect x="0.4" y="-3.8" width="4.0" height="2.2" fill="#d6c19e"/><rect x="-9.9" y="-0.2" width="1.4" height="2.2" fill="#e4bcb2"/><rect x="-7.3" y="-0.2" width="4.0" height="2.2" fill="#d6c19e"/><rect x="-2.1" y="-0.2" width="4.0" height="2.2" fill="#e4bcb2"/><rect x="3.0" y="-0.2" width="1.4" height="2.2" fill="#d6c19e"/><rect x="-9.9" y="3.5" width="4.0" height="2.2" fill="#d6c19e"/><rect x="-4.7" y="3.5" width="4.0" height="2.2" fill="#e4bcb2"/><rect x="0.4" y="3.5" width="4.0" height="2.2" fill="#d6c19e"/><rect x="-9.9" y="7.1" width="1.4" height="2.2" fill="#e4bcb2"/><rect x="-7.3" y="7.1" width="4.0" height="2.2" fill="#d6c19e"/><rect x="-2.1" y="7.1" width="4.0" height="2.2" fill="#e4bcb2"/><rect x="3.0" y="7.1" width="1.4" height="2.2" fill="#d6c19e"/><path d="M-10.500 -2.500h16" stroke="#d81e1e" stroke-width="1.700"/><path d="M9.500 -9.500v6M6.500 -5.500l3 2.500l3-2.500M6 -2.500h7M7.500 -9.500h4" fill="none" stroke="#6a5a2a" stroke-width=".900"/></g>
<g transform="translate(1437,80)"><defs><linearGradient id="gwt" x1="0" x2="1"><stop offset="0" stop-color="#f4f4f4"/><stop offset=".35" stop-color="#d0d0d0"/><stop offset="1" stop-color="#4a4a4a"/></linearGradient></defs><rect x="-5.500" y="-11.500" width="10" height="2.800" rx=".600" fill="#eee" stroke="#999" stroke-width=".500"/><rect x="-2.500" y="-9" width="4" height="3" fill="#bbb"/><path d="M-7.500 11.500v-13.500q0-4 3-4.500h8q3 .500 3 4.500v13.500z" fill="url(#gwt)" stroke="#e8e8e8" stroke-width=".800"/></g>
<g transform="translate(1437,109)"><path d="M-8.5 -8.0V5.0" stroke="#2b3a9a" stroke-width="1.600"/><path d="M-10.8 4.0h4.600l-2.300 4z" fill="#2b3a9a"/><path d="M-3.7 -8.6V3.9000000000000004" stroke="#2b3a9a" stroke-width="1.600"/><path d="M-6.0 2.9000000000000004h4.600l-2.300 4z" fill="#2b3a9a"/><path d="M1.2 -9.2V2.8" stroke="#2b3a9a" stroke-width="1.600"/><path d="M-1.0999999999999999 1.7999999999999998h4.600l-2.300 4z" fill="#2b3a9a"/><path d="M6 -9.8V1.6999999999999993" stroke="#2b3a9a" stroke-width="1.600"/><path d="M3.7 0.6999999999999993h4.600l-2.300 4z" fill="#2b3a9a"/><path d="M-10.500 10.300L10.200 5.500" stroke="#1d4663" stroke-width="1.200"/></g>
<g transform="translate(1437,139)"><path d="M9.500 -7l-9.500 2l1 2.200l-8 1.500l2-4.500l-2.500-1l-3.500 7l6.500 4l-1-2.500l8-2l1 2.500z" fill="#6a6a6a" opacity=".850"/><path d="M-5.500 -9.500L3 3.500M5 -9.500L-3 3.500" stroke="#b8b08a" stroke-width="1.400" fill="none"/><ellipse cx="-5" cy="7" rx="2.100" ry="3.900" transform="rotate(30 -5 7)" fill="none" stroke="#5fae8a" stroke-width="1.600"/><ellipse cx="5" cy="7" rx="2.100" ry="3.900" transform="rotate(-30 5 7)" fill="none" stroke="#5fae8a" stroke-width="1.600"/></g>
<g transform="translate(1480,80)"><path d="M-12 -10.800h9l3.700 3.500v14.600h-12.700z" fill="#fff" stroke="#b0b0c4" stroke-width=".800"/><path d="M-7.6 -9v11.5" stroke="#2b3a9a" stroke-width="2.4"/><path d="M-10.2 1.5h5.200l-2.600 4z" fill="#2b3a9a"/><path d="M-3.500 -7.500h11.500l3.700 3.700v15.500h-15.200z" fill="url(#gpaper)" stroke="#2b2b7a" stroke-width="1.100"/><path d="M6 -4.5v11.5" stroke="#2b3a9a" stroke-width="2.4"/><path d="M3.4 6.0h5.200l-2.600 4z" fill="#2b3a9a"/></g>
<g transform="translate(1480,109)"><path d="M-13 -6l6.500-4.500v3h8c3.500 0 5.500 2 5.500 5.500v2h-3.500v-2c0-1.500-.800-2.200-2.200-2.200h-7.800v3z" fill="#5e9a60" stroke="#3f7a44" stroke-width=".500"/><path d="M-10.5 6.5L-6.4 5.0L-9.0 2.4z" fill="#e8c9a0" stroke="#a07a4a" stroke-width=".4"/><path d="M-10.5 6.5L-9.1 6.0L-10.0 5.1z" fill="#333"/><path d="M-6.4 5.0L3.5 -4.9L0.9 -7.5L-9.0 2.4z" fill="#f5a818" stroke="#b87808" stroke-width=".4"/><path d="M-7.7 3.7L2.2 -6.2" stroke="#ffe27a" stroke-width="1.1"/><path d="M3.5 -4.9L4.5 -6.0L2.0 -8.5L0.9 -7.5z" fill="#c8c8c8"/><path d="M4.5 -6.0L5.8 -7.2L3.2 -9.8L2.0 -8.5z" fill="#e86a5a"/><path d="M4.5 -3.0L11.625 4.125L4.5 12.0z" fill="#b9d6ff"/><path d="M4.5 -3.0L-2.625 4.5L4.5 12.0L11.625 4.125zM4.5 -3.0V12.0M4.5 -3.0L1.125 7.125M4.5 -3.0L7.875 6.75M-2.625 4.5L4.5 12.0" fill="none" stroke="#1a7cff" stroke-width=".800"/><path d="M0.0 3.0Q4.5 5.25 9.0 2.25M-1.875 5.4Q4.5 9.0 11.25 4.875" fill="none" stroke="#1a7cff" stroke-width="1"/></g>
<g transform="translate(1480,139)"><path d="M-11 -11.500h6.500v18.500h-4.500v-13z" fill="#f08a5a" stroke="#d8401e" stroke-width=".900"/><path d="M-9 -8h4M-9 -5h4M-9 -2h4M-9 1h4M-9 4h4" stroke="#d8401e" stroke-width=".800"/><path d="M-4.500 -11.500h6l4 4v14.500h-10z" fill="#e6d4a8" stroke="#8a8a5a" stroke-width=".900"/><path d="M3.5 -3.5L10.625 3.625L3.5 11.5z" fill="#c8dcf0"/><path d="M3.5 -3.5L-3.625 4L3.5 11.5L10.625 3.625zM3.5 -3.5V11.5M3.5 -3.5L0.125 6.625M3.5 -3.5L6.875 6.25M-3.625 4L3.5 11.5" fill="none" stroke="#5a9ad0" stroke-width=".800"/><path d="M-1.0 2.5Q3.5 4.75 8.0 1.75M-2.875 4.9Q3.5 8.5 10.25 4.375" fill="none" stroke="#5a9ad0" stroke-width="1"/></g>
<g transform="translate(1584,80)"><g opacity=".45"><rect x="-13" y="-10.9" width="24" height="4.4" fill="#555" opacity="1"/><rect x="-12.30" y="-10.1" width="3.23" height="2.8000000000000003" fill="#e8202a" opacity="1"/><rect x="-9.07" y="-10.1" width="3.23" height="2.8000000000000003" fill="#f08a10" opacity="1"/><rect x="-5.84" y="-10.1" width="3.23" height="2.8000000000000003" fill="#f0e010" opacity="1"/><rect x="-2.61" y="-10.1" width="3.23" height="2.8000000000000003" fill="#1f9a3a" opacity="1"/><rect x="0.61" y="-10.1" width="3.23" height="2.8000000000000003" fill="#10a0e0" opacity="1"/><rect x="3.84" y="-10.1" width="3.23" height="2.8000000000000003" fill="#2060c8" opacity="1"/><rect x="7.07" y="-10.1" width="3.23" height="2.8000000000000003" fill="#c03a9a" opacity="1"/></g><path d="M-12 -5.500h10" stroke="#8a8a8a" stroke-width="1.200" stroke-dasharray="1.800 1.200"/><path d="M0.700 -4.400l.600 11.500l2.700-2.700l2.800 6l2-.900l-2.800-5.900l3.900-.300z" fill="#9a9a9a"/></g>
<g transform="translate(1584,109)"><rect x="-13" y="-9.8" width="24" height="4.6" fill="#555" opacity="1"/><rect x="-12.30" y="-9.0" width="3.23" height="2.9999999999999996" fill="#e8202a" opacity="1"/><rect x="-9.07" y="-9.0" width="3.23" height="2.9999999999999996" fill="#f08a10" opacity="1"/><rect x="-5.84" y="-9.0" width="3.23" height="2.9999999999999996" fill="#f0e010" opacity="1"/><rect x="-2.61" y="-9.0" width="3.23" height="2.9999999999999996" fill="#1f9a3a" opacity="1"/><rect x="0.61" y="-9.0" width="3.23" height="2.9999999999999996" fill="#10a0e0" opacity="1"/><rect x="3.84" y="-9.0" width="3.23" height="2.9999999999999996" fill="#2060c8" opacity="1"/><rect x="7.07" y="-9.0" width="3.23" height="2.9999999999999996" fill="#c03a9a" opacity="1"/><path d="M-3.0 6.7A6.3 6.3 0 0 1 3.9 -1.8" fill="none" stroke="#1d4663" stroke-width="2.1"/><path d="M7.7 -2.1l-4.200 -2.200l.600 4.800z" fill="#1d4663"/><path d="M6.4 1.1A6.3 6.3 0 0 1 -0.5 9.6" fill="none" stroke="#1d4663" stroke-width="2.1"/><path d="M-4.3 9.9l4.200 2.200l-.600-4.800z" fill="#1d4663"/></g>
<g transform="translate(1584,139)"><rect x="-13" y="-9.8" width="24" height="4.7" fill="#555" opacity="1"/><rect x="-12.30" y="-9.0" width="3.23" height="3.1" fill="#e8202a" opacity="1"/><rect x="-9.07" y="-9.0" width="3.23" height="3.1" fill="#f08a10" opacity="1"/><rect x="-5.84" y="-9.0" width="3.23" height="3.1" fill="#f0e010" opacity="1"/><rect x="-2.61" y="-9.0" width="3.23" height="3.1" fill="#1f9a3a" opacity="1"/><rect x="0.61" y="-9.0" width="3.23" height="3.1" fill="#10a0e0" opacity="1"/><rect x="3.84" y="-9.0" width="3.23" height="3.1" fill="#2060c8" opacity="1"/><rect x="7.07" y="-9.0" width="3.23" height="3.1" fill="#c03a9a" opacity="1"/><circle cx="1.700" cy="3.800" r="6.800" fill="#dfe8f0" stroke="#8aa4c0" stroke-width="1.400" opacity=".900"/><path d="M-2.2 6.1A5.2 5.2 0 0 1 3.5 -0.9" fill="none" stroke="#1d4663" stroke-width="2"/><path d="M6.6 -1.1l-4.200 -2.200l.600 4.800z" fill="#1d4663"/><path d="M5.6 1.5A5.2 5.2 0 0 1 -0.1 8.5" fill="none" stroke="#1d4663" stroke-width="2"/><path d="M-3.2 8.7l4.200 2.200l-.600-4.800z" fill="#1d4663"/></g>
<g transform="translate(1627,80)"><text x="-11" y="6" font-family="Liberation Sans,sans-serif" font-size="14.500" fill="#92a8be" textLength="15" lengthAdjust="spacingAndGlyphs">1.2</text><path d="M5.500 -7q5 6 0 13.500q-6 3.500-16.500 2" fill="none" stroke="#92a8be" stroke-width="1.200"/></g>
<g transform="translate(1627,109)"><path d="M-11.9 -8.7V10" stroke="#c85a5a" stroke-width=".900"/><path d="M-9.3 -5.3V10" stroke="#c85a5a" stroke-width=".900"/><path d="M-6.7 -2.9V10" stroke="#c85a5a" stroke-width=".900"/><path d="M-4.1 -1.4V10" stroke="#c85a5a" stroke-width=".900"/><path d="M-1.5 -0.8V10" stroke="#c85a5a" stroke-width=".900"/><path d="M1.1 -0.5V10" stroke="#c85a5a" stroke-width=".900"/><path d="M3.7 -0.3V10" stroke="#c85a5a" stroke-width=".900"/><path d="M6.3 0.2V10" stroke="#c85a5a" stroke-width=".900"/><path d="M8.9 0.9V10" stroke="#c85a5a" stroke-width=".900"/><polyline points="-11.9,-8.7 -10.8,-7.1 -9.8,-5.8 -8.7,-4.6 -7.6,-3.6 -6.5,-2.7 -5.5,-2.1 -4.4,-1.6 -3.3,-1.2 -2.2,-0.9 -1.2,-0.7 -0.1,-0.6 1.0,-0.5 2.1,-0.4 3.1,-0.3 4.2,-0.2 5.3,-0.0 6.4,0.2 7.4,0.4 8.5,0.7 9.6,1.1" fill="none" stroke="#d01e2a" stroke-width="1.700"/><path d="M-12 10.700h21.800" stroke="#2b3060" stroke-width="1.700"/></g>
<g transform="translate(1627,139)"><rect x="-10.3" y="-9.3" width="10" height="10" fill="#eca04e" stroke="#2b3060" stroke-width=".900"/><rect x="-0.3" y="-9.3" width="10" height="10" fill="#fde87c" stroke="#2b3060" stroke-width=".900"/><rect x="-0.3" y="0.7" width="10" height="10" fill="#eca04e" stroke="#2b3060" stroke-width=".900"/><text x="-12.500" y="11" font-family="Liberation Serif,serif" font-weight="bold" font-size="15" fill="#2b3060">C</text></g>
<g transform="translate(1668,80)"><text x="-11.500" y="7.200" font-family="Liberation Serif,serif" font-size="21" fill="#2b2b55" textLength="13" lengthAdjust="spacingAndGlyphs">Σ</text><path d="M8 -11.200v16" stroke="#3d4a9c" stroke-width="3"/><path d="M3.500 3.500h9l-4.500 7z" fill="#3d4a9c"/></g>
<g transform="translate(1668,109)"><rect x="-9.8" y="-9.4" width="9.7" height="9.9" fill="#eca04e" stroke="#2b3060" stroke-width=".900"/><rect x="-0.1" y="-9.4" width="6" height="9.9" fill="#fde87c" stroke="#2b3060" stroke-width=".900"/><rect x="-9.8" y="0.5" width="9.7" height="10" fill="#ac3a22" stroke="#2b3060" stroke-width=".900"/><rect x="-0.1" y="0.5" width="6" height="10" fill="#eca04e" stroke="#2b3060" stroke-width=".900"/><path d="M8 -9.700v16" stroke="#3d4a9c" stroke-width="3"/><path d="M3.500 5h9l-4.500 7.300z" fill="#3d4a9c"/></g>
<g transform="translate(1668,139)"><rect x="-8.8" y="-9.3" width="10.2" height="10" fill="#eca04e" stroke="#2b3060" stroke-width=".900"/><rect x="1.4" y="-9.3" width="10.3" height="10" fill="#fde87c" stroke="#2b3060" stroke-width=".900"/><rect x="1.4" y="0.7" width="10.3" height="10" fill="#eca04e" stroke="#2b3060" stroke-width=".900"/><path d="M-6.300 -4.500h3.600v12l-1.800 4l-1.800-4z" fill="#1d4663"/></g>
<g transform="translate(80,22)"><path d="M-8.900 -9.500h11.400l6.400 6.400v14.500h-17.800z" fill="url(#gpaper)" stroke="#8c8c8c" stroke-width="1"/><path d="M2.500 -9.500v6.400h6.400" fill="#fff" stroke="#8c8c8c" stroke-width=".800"/></g>
<g transform="translate(121,22)"><rect x="-10.800" y="-9.500" width="21.600" height="17" fill="#e8e8f4" stroke="#9a9ab8" stroke-width=".900"/><rect x="-10.300" y="-9" width="20.600" height="2.600" fill="#a8a4d8"/><path d="M-5.600 1h8.500l1.500 1.500h7v10h-17z" fill="#f0b840" stroke="#c08a10" stroke-width=".700"/><path d="M-7 12.500l2.500-7.500h16.500l-2 7.500z" fill="#fcd870" stroke="#c08a10" stroke-width=".700"/><path d="M-1.700 -1v6h4v-6h3l-5-5.500l-5 5.500z" fill="#1f3a8a"/></g>
<g transform="translate(150,22)"><path d="M-9.900 -10.500h19.500l1.100 1.100v19.900h-20.600z" fill="#a4a4a4" stroke="#8a8a8a" stroke-width=".600"/><rect x="-7" y="-10" width="14" height="10" fill="#ececec"/><path d="M-6 -7.500h12M-6 -5h12M-6 -2.500h12" stroke="#d0d0d0" stroke-width=".700"/><rect x="-5.500" y="3.500" width="11.500" height="7" fill="#d4d4d4"/><rect x="-3.500" y="4.500" width="3" height="5" fill="#8a8a8a"/></g>
<g transform="translate(181,22)"><path d="M-9.500 -3.500l8.500-6.500v4q10 0 10 9.500q0 4-3 7q1.500-8-7-8v4.500z" fill="#aab2cc" stroke="#c4cade" stroke-width=".600"/></g>
<g transform="translate(222,22)"><path d="M9.500 -3.500l-8.500-6.500v4q-10 0-10 9.500q0 4 3 7q-1.500-8 7-8v4.500z" fill="#aab2cc" stroke="#c4cade" stroke-width=".600"/></g>
<g transform="translate(262,22)"><path d="M-8.800 -7l13-4l5.800 3.500v15l-6 5.200l-12.800-3.700z" fill="#b4ccd8" stroke="#3a4a66" stroke-width="1"/><path d="M-8.800 -7l12.800 3.700v16M4 -3.300l6-4.200M-8.800 -1.500l12.800 3.500l6-4.500M-8.800 4l12.800 3.600l6-5" fill="none" stroke="#3a4a66" stroke-width=".800"/><path d="M4 -3.300l6-4.200v15l-6 5.200z" fill="#6a8a9c" opacity=".700"/><path d="M-8.800 -7l13-4l5.800 3.500l-6 4.200z" fill="#d8e6ee" opacity=".800"/></g>
<g transform="translate(292,22)"><path d="M-10 -3.500l9.500 4.500v10l-9.500-5z" fill="#5a58a8" stroke="#3a3880" stroke-width=".800"/><path d="M-4.500 -9l4 10v10l-4-7z" fill="#8a88c8" stroke="#3a3880" stroke-width=".700"/><path d="M-8.500 2q4-1 6 5v2.500l-6-3z" fill="#f0c020"/><path d="M-8.500 5q3 0 5 3.500l-5-2.500z" fill="#3aaa4a"/><path d="M-0.500 1l11.500-5.500v10l-11.500 5.500z" fill="#d8d8f0" stroke="#5a58a8" stroke-width=".900"/><path d="M1 3.500l9-4.200M1 6l9-4.200M1 8.500l9-4.200M5 -1.500v10M8 -3v10" stroke="#8a88c8" stroke-width=".600"/></g>
<g transform="translate(322,22)"><path d="M-9.800 -5.500l3.500-2l13 3l3.500 1.500v10.500l-3 3l-17-4z" fill="#dcdee0" stroke="#9a9ea4" stroke-width=".800"/><path d="M-9.800 -5.500l17 4.500v11.500M7.200 -1l3-2" fill="none" stroke="#b4b8be" stroke-width=".700"/><circle cx="-1" cy="3" r="4.200" fill="#f0f0f0" stroke="#8a8e94" stroke-width=".800"/><circle cx="-1" cy="3" r="2.300" fill="#1a1a1a"/><circle cx="-1.800" cy="2.200" r=".700" fill="#fff"/><rect x="-3" y="-3.500" width="2.500" height="1.500" fill="#555"/></g>
<g transform="translate(352,22)"><path d="M-9.500 1l2.500-1.500l2 3v-12.500q0-1.500 1.500-1.500t1.500 1.500v8l2-.500l2.500 .500l2 1v6l-3 7h-6.500z" fill="#e8cc9c" stroke="#c0a070" stroke-width=".700"/><path d="M2 -11h8l-3.500 7h5.500l-10.500 15.500l3-10.500h-5z" fill="#ffe030" stroke="#d0a000" stroke-width=".900"/></g>
<g transform="translate(393,22)"><path d="M-9.800 7.500l9-5.500h13.500l-7.500 5.500z" fill="#a8c070" stroke="#6a8a3a" stroke-width=".500"/><path d="M-9.800 7.500h15v4h-15z" fill="#90a858" stroke="#6a8a3a" stroke-width=".500"/><path d="M5.200 7.500l7.500-5.500v3.500l-7.500 6z" fill="#789048"/><path d="M-7.500 -6l5-3v13.500l-5 3z" fill="url(#gbluebar)" stroke="#1a2a6a" stroke-width=".500"/><path d="M-9.800 -4l2.300-2v14l-2.300 .500z" fill="#2040a0"/><path d="M-5 -7v13M-3.700 -7.800v13" stroke="#c0d0f0" stroke-width=".600"/><path d="M4 -3.500l1-1h2.300v11l-1 1.200h-2.300z" fill="#d0205a" stroke="#8a1030" stroke-width=".400"/></g>
<g transform="translate(37,92)"><text x="2.5" y="-6.5" text-anchor="middle" font-family="Liberation Sans,sans-serif" font-weight="bold" font-size="18" textLength="38" lengthAdjust="spacingAndGlyphs" fill="#23233f">X,Y,Z</text><path d="M-21 10.4h43M-9.6 -0.7v22.4" stroke="#1d4663" stroke-width="2.8"/><circle cx="-9.8" cy="10.4" r="6.8" fill="url(#gnode)" stroke="#5a8050" stroke-width=".8"/></g>
<g transform="translate(92,90)"><path d="M-10 -12.1L16.9 15" stroke="#1d4663" stroke-width="2.8"/><circle cx="-10" cy="-12.1" r="3.7" fill="url(#gnode)" stroke="#5a8050" stroke-width=".7"/><circle cx="16.9" cy="15" r="3.7" fill="url(#gnode)" stroke="#5a8050" stroke-width=".7"/></g>
<g transform="translate(153,92)"><path d="M1.2 -23.9L23.9 -1.7L1.2 23.8z" fill="#b9d6ff"/><path d="M1.2 -23.9L-21.7 -0.3L1.2 23.8L23.9 -1.7zM1.2 -23.9V23.8M1.2 -23.9L-12 8M1.2 -23.9L-3 12M1.2 -23.9L13 6M1.2 -23.9L8 10M-21.7 -0.3L1.2 23.8" fill="none" stroke="#1a7cff" stroke-width="1.3"/><path d="M-13 -6Q1 0 15 -8" fill="none" stroke="#1a7cff" stroke-width="2"/><path d="M-20 2Q1 14 22 1" fill="none" stroke="#1a7cff" stroke-width="3"/></g>
<g transform="translate(386,92)"><linearGradient id="ggreenp" x1="0" x2="0" y1="0" y2="1"><stop offset="0" stop-color="#c4dcb8"/><stop offset="1" stop-color="#fff"/></linearGradient><path d="M-7.7 -19.7h20.4l7 7v28.299999999999997h-27.4z" fill="url(#ggreenp)" stroke="#b02a2a" stroke-width="1.2"/><path d="M12.7 -19.7v7h7" fill="#eef0fa" stroke="#b02a2a" stroke-width="0.96"/><path d="M-13.8 -18.1h20.3l7 7v28.9h-27.3z" fill="url(#ggreenp)" stroke="#b02a2a" stroke-width="1.2"/><path d="M6.5 -18.1v7h7" fill="#eef0fa" stroke="#b02a2a" stroke-width="0.96"/><path d="M-20.9 -15.7h20.4l7 7v28.4h-27.4z" fill="url(#gpaper)" stroke="#3b2f7c" stroke-width="1.2"/><path d="M-0.5 -15.7v7h7" fill="#eef0fa" stroke="#3b2f7c" stroke-width="0.96"/><path d="M-17.8 -10.5h13" stroke="#7f7aa8" stroke-width="1" opacity="1"/><path d="M-17.8 -6.5h13" stroke="#7f7aa8" stroke-width="1" opacity="1"/><path d="M-17.8 -2.5h21" stroke="#7f7aa8" stroke-width="1" opacity="1"/><path d="M-17.8 1.5h21" stroke="#7f7aa8" stroke-width="1" opacity="1"/><path d="M-17.8 5.5h21" stroke="#7f7aa8" stroke-width="1" opacity="1"/><path d="M-17.8 9.5h21" stroke="#7f7aa8" stroke-width="0.6" opacity="0.5"/><path d="M-17.8 13.5h21" stroke="#7f7aa8" stroke-width="0.6" opacity="0.5"/></g>
<g transform="translate(443,92)"><path d="M-20.8 1.3l9-9h23.5l10.9 9l-6 3.2h-33z" fill="#e6c99c" stroke="#b08850" stroke-width=".8"/><path d="M-10.5 -7h21l3.5 5.5h-28z" fill="#b89264"/><circle cx="-5" cy="-4" r="4.2" fill="url(#gnode)" stroke="#6a8a50" stroke-width=".6"/><path d="M-18 5.2h33l-4.5-6.5h-24z" fill="#ecd3a8" stroke="#b08850" stroke-width=".7"/><rect x="-14.7" y="5.5" width="29.8" height="13.2" rx="1.5" fill="url(#gbox)" stroke="#b08850" stroke-width=".8"/><circle cx="-7.6" cy="-15.7" r="4.3" fill="url(#gnode)" stroke="#6a8a50" stroke-width=".6"/><circle cx="6.4" cy="-10.5" r="4.3" fill="url(#gnode)" stroke="#6a8a50" stroke-width=".6"/></g>
<g transform="translate(501,92)"><linearGradient id="ggreenp2" x1="0" x2="0" y1="0" y2="1"><stop offset="0" stop-color="#b9d2aa"/><stop offset="1" stop-color="#fff"/></linearGradient><linearGradient id="gbluep" x1="0" x2="0" y1="0" y2="1"><stop offset="0" stop-color="#c4c8ea"/><stop offset="1" stop-color="#fff"/></linearGradient><path d="M-7 -19.7h20.4l7 7v28.299999999999997h-27.4z" fill="url(#ggreenp2)" stroke="#4a6a40" stroke-width="1.2"/><path d="M13.399999999999999 -19.7v7h7" fill="#eef0fa" stroke="#4a6a40" stroke-width="0.96"/><path d="M-19.8 -15.7h20.4l7 7v28.4h-27.4z" fill="url(#gbluep)" stroke="#3b2f7c" stroke-width="1.2"/><path d="M0.5999999999999979 -15.7v7h7" fill="#eef0fa" stroke="#3b2f7c" stroke-width="0.96"/></g>
<g transform="translate(693,92)"><defs><linearGradient id="gpipe" gradientUnits="userSpaceOnUse" x1="-2.600" y1="-5.500" x2="5.600" y2="3.300"><stop offset="0" stop-color="#ffffff"/><stop offset=".28" stop-color="#eef2f5"/><stop offset=".55" stop-color="#a4b8c4"/><stop offset=".82" stop-color="#4c6c7e"/><stop offset="1" stop-color="#b8c8d2"/></linearGradient></defs><text x="-20.300" y="-2.500" font-family="Liberation Sans,sans-serif" font-size="25.500" textLength="28" lengthAdjust="spacingAndGlyphs" fill="#34346a">EF</text><path d="M-15.800 5.800L10 -17.800a5.300 5.300 0 0 1 7.800 7.400L-6.500 15.800z" fill="url(#gpipe)" stroke="#fff" stroke-width="1.300"/><ellipse cx="-11.300" cy="10.700" rx="8.100" ry="8.100" fill="#fff" stroke="#e4e8ec" stroke-width=".700"/><ellipse cx="-10.800" cy="11.200" rx="4.500" ry="4.500" fill="#4a4a68"/><path d="M-14 9.500a4 4 0 0 1 4.500 -2.500" stroke="#8a8aa8" stroke-width="1.300" fill="none"/><path d="M12.900 1.700v20M2.900 11.700h20" stroke="#33389a" stroke-width="6"/><path d="M11 2v7M3.200 9.800h8" stroke="#6a72c8" stroke-width="1.200"/></g>
<g transform="translate(852,92)"><path d="M-2.3 -22.8h6.3v5.8h8.7v3h-23.7v-3h8.7z" fill="#b8283a"/><path d="M-10.5 15.3h23v3.4h-8.5v4.7h-6.3v-4.7h-8.2z" fill="#1d4a5c"/><defs><linearGradient id="gr45" x1="0" x2="0" y1="0" y2="1"><stop offset="0" stop-color="#24347c"/><stop offset=".45" stop-color="#5a4a8a"/><stop offset=".55" stop-color="#c83a4a"/><stop offset="1" stop-color="#d81e1e"/></linearGradient></defs><path fill-rule="evenodd" d="M-21.9 -14.1h45.6v29.4h-45.6zM-14.099999999999998 -9.8h30.0a3.5 3.5 0 0 1 3.5 3.5v13.799999999999997a3.5 3.5 0 0 1 -3.5 3.5h-30.0a3.5 3.5 0 0 1 -3.5 -3.5v-13.799999999999997a3.5 3.5 0 0 1 3.5 -3.5z" fill="url(#gr45)"/><path d="M12.7 -0.3v23.3M1 11.2h23" stroke="url(#ggold)" stroke-width="6.3"/><path d="M10.3 0v8.2M1.3 8.8h9" stroke="#fff6a0" stroke-width="1"/></g>
<g transform="translate(987,92)"><path d="M-19 -16.5l5 5v33l-5-4.5z" fill="#a8bcc8" stroke="#2a4a5c" stroke-width=".8"/><path d="M-14 -11.5h35v8h-22v25h-13z" fill="#e6ccd2" stroke="#2a4a5c" stroke-width=".8"/><path d="M-19 -16.5h33l7 5h-35z" fill="#d6e0e8" stroke="#2a4a5c" stroke-width=".8"/><path d="M-10 -7.5h29M-7.5 -7.5v27" stroke="#e09aa4" stroke-width="2.2" stroke-dasharray="2 1.4"/><path d="M-10 -7.5h29M-7.5 -7.5v27" stroke="#d07080" stroke-width=".7"/><path d="M-19 -16.5L4.5 5.5l8.5 0l-2-6.5L-11 -16.5z" fill="#cfdbe4" stroke="#2a4a5c" stroke-width=".9"/><path d="M-14 -11.5L6 5.5l5.5-2L-5 -13z" fill="#e0bfc8" stroke="#2a4a5c" stroke-width=".5"/><path d="M4.5 5.5v5.5l8.5 .5v-6z" fill="#f0f4f8" stroke="#2a4a5c" stroke-width=".9"/><path d="M-15.5 -22v8.5M-11.5 -22v8.5M7 5l7.5 9M10.5 4.5l8.5 9" stroke="#d81e1e" stroke-width="1.5"/></g>
<g transform="translate(1082,92)"><defs><linearGradient id="ghh" x1="0" x2="1" y1="0" y2="0"><stop offset="0" stop-color="#3c3c3c"/><stop offset=".38" stop-color="#a8a8a8"/><stop offset=".55" stop-color="#fafafa"/><stop offset=".75" stop-color="#e8e8e8"/><stop offset=".9" stop-color="#5a5a5a"/><stop offset="1" stop-color="#bdbdbd"/></linearGradient><linearGradient id="ghd" gradientUnits="userSpaceOnUse" x1="-10" y1="5" x2="-4" y2="9"><stop offset="0" stop-color="#f6c818"/><stop offset=".6" stop-color="#eeb90e"/><stop offset="1" stop-color="#a88208"/></linearGradient></defs><ellipse cx="2" cy="20.800" rx="16" ry="2.300" fill="#404850" opacity=".28"/><path d="M-4.400 -4.900L2.800 -12.600L6.600 -12.100L-1.100 -2.300z" fill="#f2f2f2" stroke="#c4c4c4" stroke-width=".500"/><path d="M-6.500 -4.900L-1.100 -1.800L-17.200 23.600Q-22.500 23.500 -23.900 19.300z" fill="url(#ghd)"/><path d="M-10.600 -20.800Q-5 -25.500 4 -24Q9.500 -22.500 13 -18.500L20.800 -12.600L17.700 -7.500Q15 -11.500 12.500 -12.800Q9 -14.800 5.900 -11.600L1.800 -13.100Q3.500 -19.500 -2.300 -20.300Q-7 -20.800 -10.600 -18.800z" fill="url(#ghh)" stroke="#8a8e94" stroke-width=".400"/><path d="M13.500 -13.500L20.800 -12.600L17.700 -7.500Q15.500 -11 13 -12z" fill="#4a4a4a" opacity=".75"/></g>
<g transform="translate(1189,92)"><path d="M-19.600 12.600l17-11.100h24.300l-11.800 11.100z" fill="#cdd6a8" stroke="#8a9a6a" stroke-width=".600"/><path d="M-19.600 12.600h29.500v5.900h-29.500z" fill="#b4c08a" stroke="#8a9a6a" stroke-width=".600"/><path d="M9.900 12.600l11.800-11.100v5.200l-11.800 11.800z" fill="#98a870" stroke="#8a9a6a" stroke-width=".600"/><path d="M-15.700 -11.600l11.100-6.600v23.600l-11.100 6.600z" fill="url(#gbluebar)" stroke="#1f3070" stroke-width=".600"/><path d="M-19.600 -7l3.900-4.600v23.600l-3.900 .600z" fill="#8aa0d8" stroke="#1f3070" stroke-width=".600"/><path d="M-8.500 -12v20" stroke="#8aa0d8" stroke-width="1" opacity=".800"/><path d="M5.300 -7.200l2-2h4.500v19l-2 2.500h-4.500z" fill="#c8284a" stroke="#8a1a30" stroke-width=".500"/><path d="M9.800 -7.200l2-2v19l-2 2.500z" fill="#8a1a30"/><path d="M6.500 -6v17" stroke="#f08a9a" stroke-width="1"/></g>
<g transform="translate(1335,92)"><path d="M-20.100 -10.200l11.500-8.800v5h12c9 0 13.500 6 13.500 15.500v3h-6.800v-3c0-6-2.500-8.500-7-8.500h-11.700v5z" fill="#5e9a60" stroke="#3f7a44" stroke-width=".600"/><path d="M-17.4 14.6L-10.1 11.8L-14.7 7.2z" fill="#e8c9a0" stroke="#a07a4a" stroke-width=".4"/><path d="M-17.4 14.6L-14.8 13.6L-16.5 12.0z" fill="#333"/><path d="M-10.1 11.8L8.4 -7.0L3.8 -11.6L-14.7 7.2z" fill="#f5a818" stroke="#b87808" stroke-width=".4"/><path d="M-12.4 9.5L6.1 -9.3" stroke="#ffe27a" stroke-width="1.9"/><path d="M8.4 -7.0L10.2 -8.9L5.6 -13.5L3.8 -11.6z" fill="#c8c8c8"/><path d="M10.2 -8.9L12.5 -11.2L7.9 -15.8L5.6 -13.5z" fill="#e86a5a"/><text x="-7" y="21.500" font-family="Liberation Sans,sans-serif" font-size="27" textLength="29" lengthAdjust="spacingAndGlyphs" fill="#45456e">№</text></g>
<g transform="translate(1393,92)"><path d="M-1.500 -19h5.500v21h3.400l-6.100 7.200l-6.200-7.200h3.400z" fill="#3d4a9c"/><path d="M-0.800 -18.500v20" stroke="#6a78c8" stroke-width=".800"/><circle cx="0.900" cy="15.700" r="5" fill="url(#gnode)" stroke="#7a9a5a" stroke-width=".800"/></g>
<g transform="translate(1540,92)"><path d="M-22 4q-1-9 8-11q6-5 16-2q10-1 15 4q6 5 3 11q-3 5-12 5q-4 4-14 2q-14 0-16-9z" fill="#a9b8bc" opacity=".85"/><path d="M-7.200 -4.300L-15 -18" stroke="#2b3a8a" stroke-width="1.200"/><path d="M-17 -21l.800 6.500l4-2.300z" fill="#2b3a8a"/><path d="M-7.200 -4.300L11 -15" stroke="#1f8a3a" stroke-width="1.200"/><path d="M15 -17.200l-6.500 .800l2.400 4z" fill="#1f8a3a"/><path d="M-0.400 4v13" stroke="#d81e2a" stroke-width="2.300"/><path d="M-4.800 16h8.800l-4.400 7z" fill="#c81e2a"/><circle cx="-0.400" cy="3.600" r="3.400" fill="#d81e2a"/><text x="5.500" y="19.300" font-family="Liberation Serif,serif" font-weight="bold" font-size="25" fill="#262626" textLength="18" lengthAdjust="spacingAndGlyphs">G</text></g>
<g transform="translate(31,30)"><circle cx="0.500" cy="0.800" r="18.400" fill="url(#gorb)" stroke="#8a929a" stroke-width="1"/><ellipse cx="0.500" cy="-7" rx="14" ry="9" fill="#fff" opacity=".550"/><g fill="none" stroke="#4a9cc0" stroke-width="2.300" stroke-linecap="round"><path d="M-11.500 -6.500q-1.500-4 1.500-4.500q3.500 0 3.500 4q0 5 0 12q0 5 2.500 8"/><path d="M-6.500 -7.500h17q3-.500 3-2.500"/><path d="M-2.500 -7v17M1 -7v19M4.500 -7v17"/><path d="M-4.500 -3h11M-4.500 5.500h8"/><path d="M7.500 -7q6 .500 6 5.500q0 5-5 5q-3 0-3-2.500q0-2.500 3-2.500"/></g></g>
</svg>
<div id="viewport"></div>
<svg class="model" width="1906" height="811" viewBox="0 186 1906 811" shape-rendering="crispEdges" style="position:absolute;left:0;top:186px"><polygon points="99.8,443.5 110.8,456.5 110.8,730.0 99.8,724.0" fill="#00ffff" stroke="#000" stroke-width="2.4"/>
<polygon points="56.2,467.3 110.2,457.8 110.2,738.1 56.2,747.6" fill="#ffff00" stroke="#000" stroke-width="2.4"/>
<polygon points="110.2,457.8 122.9,469.7 122.9,750.8 110.2,738.1" fill="#00ffff" stroke="#000" stroke-width="2.4"/>
<polygon points="112.5,529.2 120.5,535.6 120.5,568.0 112.5,561.7" fill="#000080" stroke="#000" stroke-width="2.4"/>
<polygon points="112.5,565.0 120.3,572.0 120.3,718.0 112.5,711.0" fill="#004000" stroke="#000" stroke-width="2.4"/>
<polygon points="56.2,557.6 109.4,544.3 120.5,555.4 67.3,567.3" fill="#ff80ff" stroke="#000" stroke-width="2.4"/>
<polygon points="56.2,722.0 111.7,711.9 121.3,723.0 67.3,733.3" fill="#ff80ff" stroke="#000" stroke-width="2.4"/>
<line x1="110.8" y1="556.0" x2="110.8" y2="649.0" stroke="#ff0000" stroke-width="3.5" />
<line x1="108.6" y1="542.7" x2="120.5" y2="557.0" stroke="#ff0000" stroke-width="4" />
<line x1="108.6" y1="649.2" x2="120.5" y2="661.0" stroke="#ff0000" stroke-width="4" />
<line x1="122.3" y1="469.7" x2="122.3" y2="750.8" stroke="#000" stroke-width="4" />
<polygon points="45.1,454.6 56.2,467.3 56.2,747.6 45.1,734.9" fill="#00ffff" stroke="#000" stroke-width="2.4"/>
<polygon points="56.2,467.3 68.1,480.8 67.5,761.1 56.2,747.6" fill="#00ffff" stroke="#000" stroke-width="2.4"/>
<line x1="45.1" y1="541.1" x2="67.6" y2="567.3" stroke="#000" stroke-width="2.4" />
<line x1="45.1" y1="708.0" x2="67.6" y2="733.3" stroke="#000" stroke-width="2.4" />
<line x1="57.5" y1="495.0" x2="57.5" y2="740.0" stroke="#000" stroke-width="1" stroke-dasharray="1 9" opacity=".6"/>
<polygon points="123.7,658.4 168.0,650.1 123.7,696.0" fill="#ff80ff" stroke="#000" stroke-width="2.4"/>
<polygon points="123.7,699.2 170.5,649.6 195.0,645.0 123.7,718.3" fill="#0080ff" stroke="#000" stroke-width="2.4"/>
<polygon points="131.6,528.4 1200.0,328.3 1200.0,341.4 131.6,541.5" fill="#80ff00" stroke="#000" stroke-width="2.4"/>
<line x1="123.7" y1="529.9" x2="132.0" y2="528.3" stroke="#000" stroke-width="2.4" />
<polygon points="128.5,533.5 128.5,540.5 124.0,541.5 124.0,534.2" fill="#800000" stroke="#000" stroke-width="1"/>
<polygon points="123.7,543.0 1213.5,338.9 1224.2,348.7 123.7,554.8" fill="#80ff00" stroke="#000" stroke-width="2.4"/>
<polygon points="123.7,554.8 1213.5,350.7 1213.5,442.5 123.7,646.6" fill="#0000ff" stroke="#000" stroke-width="2.4"/>
<polygon points="123.7,646.6 1213.5,442.5 1224.2,452.3 123.7,658.4" fill="#80ff00" stroke="#000" stroke-width="2.4"/>
<polygon points="185.5,543.2 195.2,541.4 195.2,645.0 185.5,635.0" fill="#008000" stroke="#000" stroke-width="2.4"/>
<polygon points="1141.3,364.2 1150.3,362.5 1150.3,466.1 1141.3,456.0" fill="#008000" stroke="#000" stroke-width="2.4"/>
<line x1="174.5" y1="520.4" x2="195.3" y2="541.4" stroke="#ff0000" stroke-width="3.5" />
<line x1="184.5" y1="543.4" x2="184.5" y2="635.2" stroke="#ff0000" stroke-width="3.2" />
<line x1="184.5" y1="546.4" x2="184.5" y2="633.2" stroke="#a00040" stroke-width="0.8" stroke-dasharray="1 3.4"/>
<line x1="183.7" y1="634.7" x2="195.3" y2="645.0" stroke="#ff0000" stroke-width="3.2" />
<line x1="322.2" y1="492.7" x2="343.0" y2="513.7" stroke="#ff0000" stroke-width="3.5" />
<line x1="332.2" y1="515.7" x2="332.2" y2="607.5" stroke="#ff0000" stroke-width="3.2" />
<line x1="332.2" y1="518.7" x2="332.2" y2="605.5" stroke="#a00040" stroke-width="0.8" stroke-dasharray="1 3.4"/>
<line x1="331.4" y1="607.0" x2="343.0" y2="617.3" stroke="#ff0000" stroke-width="3.2" />
<line x1="543.0" y1="451.4" x2="563.8" y2="472.4" stroke="#ff0000" stroke-width="3.5" />
<line x1="553.0" y1="474.4" x2="553.0" y2="566.2" stroke="#ff0000" stroke-width="3.2" />
<line x1="553.0" y1="477.4" x2="553.0" y2="564.2" stroke="#a00040" stroke-width="0.8" stroke-dasharray="1 3.4"/>
<line x1="552.2" y1="565.7" x2="563.8" y2="576.0" stroke="#ff0000" stroke-width="3.2" />
<line x1="764.0" y1="410.0" x2="784.8" y2="431.0" stroke="#ff0000" stroke-width="3.5" />
<line x1="774.0" y1="433.0" x2="774.0" y2="524.8" stroke="#ff0000" stroke-width="3.2" />
<line x1="774.0" y1="436.0" x2="774.0" y2="522.8" stroke="#a00040" stroke-width="0.8" stroke-dasharray="1 3.4"/>
<line x1="773.2" y1="524.3" x2="784.8" y2="534.6" stroke="#ff0000" stroke-width="3.2" />
<line x1="985.0" y1="368.6" x2="1005.8" y2="389.6" stroke="#ff0000" stroke-width="3.5" />
<line x1="995.0" y1="391.6" x2="995.0" y2="483.4" stroke="#ff0000" stroke-width="3.2" />
<line x1="995.0" y1="394.6" x2="995.0" y2="481.4" stroke="#a00040" stroke-width="0.8" stroke-dasharray="1 3.4"/>
<line x1="994.2" y1="482.9" x2="1005.8" y2="493.2" stroke="#ff0000" stroke-width="3.2" />
<line x1="1130.2" y1="341.4" x2="1151.0" y2="362.4" stroke="#ff0000" stroke-width="3.5" />
<line x1="1140.2" y1="364.4" x2="1140.2" y2="456.2" stroke="#ff0000" stroke-width="3.2" />
<line x1="1140.2" y1="367.4" x2="1140.2" y2="454.2" stroke="#a00040" stroke-width="0.8" stroke-dasharray="1 3.4"/>
<line x1="1139.4" y1="455.7" x2="1151.0" y2="466.0" stroke="#ff0000" stroke-width="3.2" />
<polygon points="1259.2,226.7 1270.4,241.0 1270.4,520.3 1259.2,507.0" fill="#00ffff" stroke="#000" stroke-width="2.4"/>
<polygon points="1214.1,248.6 1270.4,241.0 1270.4,520.3 1214.1,530.0" fill="#ffff00" stroke="#000" stroke-width="2.4"/>
<polygon points="1270.4,241.0 1282.2,252.8 1282.2,533.0 1270.4,520.3" fill="#00ffff" stroke="#000" stroke-width="2.4"/>
<line x1="1270.4" y1="336.5" x2="1282.2" y2="336.0" stroke="#000" stroke-width="2.4" />
<line x1="1270.4" y1="506.0" x2="1282.2" y2="504.8" stroke="#000" stroke-width="2.4" />
<polygon points="1214.1,338.5 1269.6,327.6 1278.0,336.0 1225.9,348.9" fill="#ff80ff" stroke="#000" stroke-width="2.4"/>
<polygon points="1214.1,504.3 1269.6,494.3 1278.0,504.4 1225.9,514.8" fill="#ff80ff" stroke="#000" stroke-width="2.4"/>
<polygon points="1203.2,236.8 1214.1,248.6 1214.1,530.4 1203.2,517.8" fill="#00ffff" stroke="#000" stroke-width="2.4"/>
<polygon points="1214.1,248.6 1225.9,262.0 1225.9,543.0 1214.1,530.4" fill="#00ffff" stroke="#000" stroke-width="2.4"/>
<polygon points="1152.0,465.8 1161.0,464.1 1221.5,509.6 1216.0,509.4" fill="#0080ff" stroke="#000" stroke-width="1.5"/>
<polygon points="1158.0,464.7 1213.3,454.3 1213.3,500.2" fill="#ff80ff" stroke="#000" stroke-width="2.4"/>
<polygon points="1190.0,331.4 1202.5,329.0 1213.3,335.4 1213.3,338.9 1190.0,343.3" fill="#80ff00" stroke="none" stroke-width="0"/>
<polygon points="1206.6,308.2 1213.3,315.8 1213.3,336.0 1206.6,330.0" fill="#000080" stroke="#000" stroke-width="2.4"/>
<polygon points="1197.3,331.0 1213.3,320.0 1213.3,336.5 1197.3,339.3" fill="#800000" stroke="#000" stroke-width="1.5"/>
<polygon points="1190.0,343.3 1213.5,338.9 1224.2,348.7 1190.0,355.1" fill="#80ff00" stroke="none" stroke-width="0"/>
<line x1="1150.0" y1="350.8" x2="1213.5" y2="338.9" stroke="#000" stroke-width="2.4" />
<line x1="1150.0" y1="362.6" x2="1224.2" y2="348.7" stroke="#000" stroke-width="2.4" />
<polygon points="1200.0,354.2 1213.5,351.7 1213.5,441.5 1200.0,444.0" fill="#0000ff" stroke="none" stroke-width="0"/>
<polygon points="1190.0,446.9 1213.5,442.5 1224.2,452.3 1190.0,458.7" fill="#80ff00" stroke="none" stroke-width="0"/>
<line x1="1150.0" y1="454.4" x2="1213.5" y2="442.5" stroke="#000" stroke-width="2.4" />
<line x1="1150.0" y1="466.2" x2="1224.2" y2="452.3" stroke="#000" stroke-width="2.4" />
<polygon points="1216.0,321.0 1221.7,327.6 1221.7,361.0 1216.0,359.5" fill="#000080" stroke="#000" stroke-width="2.4"/>
<polygon points="1216.6,352.0 1221.9,356.0 1221.9,509.4 1216.6,505.0" fill="#004000" stroke="#000" stroke-width="1"/>
<line x1="1214.3" y1="350.0" x2="1214.3" y2="444.0" stroke="#ff0000" stroke-width="4.5" />
<line x1="1212.0" y1="334.3" x2="1224.2" y2="348.6" stroke="#ff0000" stroke-width="4.5" />
<line x1="1213.3" y1="443.0" x2="1224.2" y2="454.0" stroke="#ff0000" stroke-width="4.5" />
<line x1="1224.6" y1="325.0" x2="1224.6" y2="514.0" stroke="#000" stroke-width="4.6" />
<line x1="341.5" y1="919.6" x2="1445.5" y2="711.8" stroke="#ff0000" stroke-width="1.2" />
<line x1="378.7" y1="857.6" x2="378.7" y2="964.0" stroke="#ff0000" stroke-width="3" />
<line x1="372.7" y1="852.6" x2="384.7" y2="863.6" stroke="#ff0000" stroke-width="1.6" />
<line x1="372.7" y1="960.0" x2="384.7" y2="971.0" stroke="#ff0000" stroke-width="1.6" />
<line x1="489.5" y1="836.7" x2="489.5" y2="944.7" stroke="#ff0000" stroke-width="3" />
<line x1="483.5" y1="831.7" x2="495.5" y2="842.7" stroke="#ff0000" stroke-width="1.6" />
<line x1="483.5" y1="940.7" x2="495.5" y2="951.7" stroke="#ff0000" stroke-width="1.6" />
<line x1="672.5" y1="802.7" x2="672.5" y2="911.2" stroke="#ff0000" stroke-width="3" />
<line x1="666.5" y1="797.7" x2="678.5" y2="808.7" stroke="#ff0000" stroke-width="1.6" />
<line x1="666.5" y1="907.2" x2="678.5" y2="918.2" stroke="#ff0000" stroke-width="1.6" />
<line x1="893.7" y1="761.2" x2="893.7" y2="868.2" stroke="#ff0000" stroke-width="3" />
<line x1="887.7" y1="756.2" x2="899.7" y2="767.2" stroke="#ff0000" stroke-width="1.6" />
<line x1="887.7" y1="864.2" x2="899.7" y2="875.2" stroke="#ff0000" stroke-width="1.6" />
<line x1="1114.3" y1="720.3" x2="1114.3" y2="827.3" stroke="#ff0000" stroke-width="3" />
<line x1="1108.3" y1="715.3" x2="1120.3" y2="726.3" stroke="#ff0000" stroke-width="1.6" />
<line x1="1108.3" y1="823.3" x2="1120.3" y2="834.3" stroke="#ff0000" stroke-width="1.6" />
<line x1="1298.5" y1="685.0" x2="1298.5" y2="792.7" stroke="#ff0000" stroke-width="3" />
<line x1="1292.5" y1="680.0" x2="1304.5" y2="691.0" stroke="#ff0000" stroke-width="1.6" />
<line x1="1292.5" y1="788.7" x2="1304.5" y2="799.7" stroke="#ff0000" stroke-width="1.6" />
<line x1="1409.3" y1="663.6" x2="1409.3" y2="772.2" stroke="#ff0000" stroke-width="3" />
<line x1="1403.3" y1="658.6" x2="1415.3" y2="669.6" stroke="#ff0000" stroke-width="1.6" />
<line x1="1403.3" y1="768.2" x2="1415.3" y2="779.2" stroke="#ff0000" stroke-width="1.6" /></svg>
<div id="vpnum">1</div>
<svg width="1906" height="300" style="left:0;top:0"><polygon points="1249,95 1295.5,95 1890,202.5 1306.5,202.5" fill="rgba(235,185,40,0.4)"/><path d="M1249.5 95L1307 202.5M1295 95L1889 202.5" stroke="rgba(232,180,40,.7)" stroke-width="2.2" fill="none"/></svg>
<div id="dlg"><div id="dlgin"><div class="tb"></div>
<div class="lbl" style="left:29px;top:8px;font-size:12px;letter-spacing:-0.3px;color:#999;line-height:15px;height:15px">Bar analogues</div>
<div class="abs" style="left:2px;top:53px;width:573px;height:1px;background:#d9d9d9"></div>
<div class="abs" style="left:2px;top:32px;width:46px;height:22px;background:#fff;border:1px solid #e3e3e3;border-bottom:none"></div>
<div class="abs" style="left:48px;top:34px;width:38px;height:19px;background:#f0f0f0;border:1px solid #d9d9d9;border-bottom:none"></div>
<div class="grp" style="left:6px;top:63px;width:569px;height:160px"></div>
<div class="gl" style="left:12px;top:58px">Bar analogue</div>
<div class="grp" style="left:12px;top:98px;width:512px;height:54px"></div>
<div class="gl" style="left:19px;top:93px">1 :  First cross section</div>
<div class="grp" style="left:12px;top:163px;width:512px;height:54px"></div>
<div class="gl" style="left:19px;top:158px">2 :  Last cross section</div>
<div class="grp" style="left:6px;top:232px;width:569px;height:182px"></div>
<div class="gl" style="left:12px;top:227px">List of bar analogues</div>
<div class="lbl" style="left:13.5px;top:76px;letter-spacing:0;word-spacing:0.5px">A :  Number of target bar</div>
<div class="inp" style="left:249px;top:72px;width:195px;height:20px">1</div>
<div class="lbl" style="left:20px;top:110px;">N :  Numbers of nodes</div>
<div class="inp" style="left:152px;top:106px;width:293px;height:20px">1 148 459 1082 1706 3881 5125 5748 6060 6371 9172 104</div>
<div class="lbl" style="left:20px;top:131px;">E :  Numbers of elements</div>
<div class="inp" style="left:152px;top:128px;width:293px;height:19px">16115-16127 16161-16220 16231-16265</div>
<div class="lbl" style="left:20px;top:175px;">N :  Numbers of nodes</div>
<div class="inp" style="left:152px;top:171px;width:293px;height:20px">499 1122 2056 3609 3921 4853 5165 7033 7344 7656 7968</div>
<div class="lbl" style="left:20px;top:196px;">E :  Numbers of elements</div>
<div class="inp" style="left:152px;top:192px;width:293px;height:20px">22365-22472</div>
<div class="btn" style="left:450px;top:73px;width:31px;height:18px">&lt;&lt;</div>
<div class="btn" style="left:486px;top:73px;width:31px;height:18px">&gt;&gt;</div>
<div class="btn" style="left:450px;top:107px;width:31px;height:18px">&lt;&lt;</div>
<div class="btn" style="left:486px;top:107px;width:31px;height:18px">&gt;&gt;</div>
<div class="btn" style="left:450px;top:128px;width:31px;height:18px">&lt;&lt;</div>
<div class="btn" style="left:486px;top:128px;width:31px;height:18px">&gt;&gt;</div>
<div class="btn" style="left:450px;top:172px;width:31px;height:18px">&lt;&lt;</div>
<div class="btn" style="left:486px;top:172px;width:31px;height:18px">&gt;&gt;</div>
<div class="btn" style="left:450px;top:193px;width:31px;height:18px">&lt;&lt;</div>
<div class="btn" style="left:486px;top:193px;width:31px;height:18px">&gt;&gt;</div>
<div class="btn" style="left:532px;top:71px;width:31px;height:21px"></div>
<div class="btn" style="left:532px;top:97px;width:31px;height:21px"></div>
<div class="btn" style="left:532px;top:123px;width:31px;height:21px"></div>
<div class="btn" style="left:532px;top:244px;width:31px;height:21px"></div>
<div class="btn" style="left:532px;top:270px;width:31px;height:21px"></div>
<div class="btn" style="left:532px;top:296px;width:31px;height:21px"></div>
<div class="btn" style="left:532px;top:322px;width:31px;height:21px"></div>
<div class="btn" style="left:481px;top:417px;width:31px;height:21px"></div>
<div class="btn" style="left:517px;top:417px;width:31px;height:21px"></div>
<div class="abs" style="left:12px;top:243px;width:510px;height:163px;background:#fff;border:1px solid #828790"></div>
<div class="abs" style="left:18px;top:269px;width:483px;height:119px;background:#f0f0f0"></div>
<div class="abs" style="left:94px;top:245px;width:1px;height:24px;background:#e5e5e5"></div>
<div class="abs" style="left:94px;top:388px;width:1px;height:17px;background:#f0f0f0"></div>
<div class="abs" style="left:175.5px;top:245px;width:1px;height:24px;background:#e5e5e5"></div>
<div class="abs" style="left:175.5px;top:388px;width:1px;height:17px;background:#f0f0f0"></div>
<div class="abs" style="left:256.5px;top:245px;width:1px;height:24px;background:#e5e5e5"></div>
<div class="abs" style="left:256.5px;top:388px;width:1px;height:17px;background:#f0f0f0"></div>
<div class="abs" style="left:337.5px;top:245px;width:1px;height:24px;background:#e5e5e5"></div>
<div class="abs" style="left:337.5px;top:388px;width:1px;height:17px;background:#f0f0f0"></div>
<div class="abs" style="left:418.5px;top:245px;width:1px;height:24px;background:#e5e5e5"></div>
<div class="abs" style="left:418.5px;top:388px;width:1px;height:17px;background:#f0f0f0"></div>
<div class="abs" style="left:499.5px;top:245px;width:1px;height:24px;background:#e5e5e5"></div>
<div class="abs" style="left:499.5px;top:388px;width:1px;height:17px;background:#f0f0f0"></div>
<div class="abs" style="left:13px;top:269px;width:5px;height:1px;background:#f0f0f0"></div>
<div class="abs" style="left:501px;top:286px;width:20px;height:1px;background:#f0f0f0"></div>
<div class="abs" style="left:13px;top:286px;width:5px;height:1px;background:#f0f0f0"></div>
<div class="abs" style="left:501px;top:303px;width:20px;height:1px;background:#f0f0f0"></div>
<div class="abs" style="left:13px;top:303px;width:5px;height:1px;background:#f0f0f0"></div>
<div class="abs" style="left:501px;top:320px;width:20px;height:1px;background:#f0f0f0"></div>
<div class="abs" style="left:13px;top:320px;width:5px;height:1px;background:#f0f0f0"></div>
<div class="abs" style="left:501px;top:337px;width:20px;height:1px;background:#f0f0f0"></div>
<div class="abs" style="left:13px;top:337px;width:5px;height:1px;background:#f0f0f0"></div>
<div class="abs" style="left:501px;top:354px;width:20px;height:1px;background:#f0f0f0"></div>
<div class="abs" style="left:13px;top:354px;width:5px;height:1px;background:#f0f0f0"></div>
<div class="abs" style="left:501px;top:371px;width:20px;height:1px;background:#f0f0f0"></div>
<div class="abs" style="left:13px;top:371px;width:5px;height:1px;background:#f0f0f0"></div>
<div class="abs" style="left:501px;top:388px;width:20px;height:1px;background:#f0f0f0"></div>
<div class="cell" style="left:19.5px;top:251.5px">ID</div>
<div class="cell" style="left:100.5px;top:251.5px">A</div>
<div class="cell" style="left:182.0px;top:251.5px">1:N</div>
<div class="cell" style="left:263.0px;top:251.5px">1:E</div>
<div class="cell" style="left:344.0px;top:251.5px">2:N</div>
<div class="cell" style="left:425.0px;top:251.5px">2:E</div>
<div class="cell" style="left:19.5px;top:272.3px">1</div>
<div class="cell" style="left:100.5px;top:272.3px">1</div>
<div class="cell" style="left:182.0px;top:272.3px">1 148 459 1...</div>
<div class="cell" style="left:263.0px;top:272.3px">16115-161...</div>
<div class="cell" style="left:344.0px;top:272.3px">499 1122 2...</div>
<div class="cell" style="left:425.0px;top:272.3px">22365-22472</div>
<div class="cell" style="left:19.5px;top:289.3px">2</div>
<div class="cell" style="left:100.5px;top:289.3px">2</div>
<div class="cell" style="left:182.0px;top:289.3px">499 1122 2...</div>
<div class="cell" style="left:263.0px;top:289.3px">23937-24044</div>
<div class="cell" style="left:344.0px;top:289.3px">267 579 88...</div>
<div class="cell" style="left:425.0px;top:289.3px">32469-32576</div>
<div class="cell" style="left:19.5px;top:306.29999999999995px">3</div>
<div class="cell" style="left:100.5px;top:306.29999999999995px">3</div>
<div class="cell" style="left:182.0px;top:306.29999999999995px">267 579 88...</div>
<div class="cell" style="left:263.0px;top:306.29999999999995px">32577-32684</div>
<div class="cell" style="left:344.0px;top:306.29999999999995px">387 699 10...</div>
<div class="cell" style="left:425.0px;top:306.29999999999995px">45429-45536</div>
<div class="cell" style="left:19.5px;top:323.29999999999995px">4</div>
<div class="cell" style="left:100.5px;top:323.29999999999995px">4</div>
<div class="cell" style="left:182.0px;top:323.29999999999995px">387 699 10...</div>
<div class="cell" style="left:263.0px;top:323.29999999999995px">45537-45644</div>
<div class="cell" style="left:344.0px;top:323.29999999999995px">18682 1883...</div>
<div class="cell" style="left:425.0px;top:323.29999999999995px">58389-58496</div>
<div class="cell" style="left:19.5px;top:340.29999999999995px">5</div>
<div class="cell" style="left:100.5px;top:340.29999999999995px">5</div>
<div class="cell" style="left:182.0px;top:340.29999999999995px">18682 1883...</div>
<div class="cell" style="left:263.0px;top:340.29999999999995px">58497-58604</div>
<div class="cell" style="left:344.0px;top:340.29999999999995px">18955 1924...</div>
<div class="cell" style="left:425.0px;top:340.29999999999995px">71349-71456</div>
<div class="cell" style="left:19.5px;top:357.29999999999995px">6</div>
<div class="cell" style="left:100.5px;top:357.29999999999995px">6</div>
<div class="cell" style="left:182.0px;top:357.29999999999995px">18955 1924...</div>
<div class="cell" style="left:263.0px;top:357.29999999999995px">71457-71564</div>
<div class="cell" style="left:344.0px;top:357.29999999999995px">20181 2047...</div>
<div class="cell" style="left:425.0px;top:357.29999999999995px">79989-80096</div>
<div class="cell" style="left:19.5px;top:374.29999999999995px">7</div>
<div class="cell" style="left:100.5px;top:374.29999999999995px">7</div>
<div class="cell" style="left:182.0px;top:374.29999999999995px">20181 2047...</div>
<div class="cell" style="left:263.0px;top:374.29999999999995px">81561-81668</div>
<div class="cell" style="left:344.0px;top:374.29999999999995px">19074 2022...</div>
<div class="cell" style="left:425.0px;top:374.29999999999995px">87768-877...</div>
<div class="abs" style="left:12px;top:421px;width:13px;height:13px;background:#fff;border:1px solid #333"></div>
<div class="abs" style="left:171px;top:421px;width:13px;height:13px;background:#fff;border:1px solid #333"></div>
<div class="lbl" style="left:27.5px;top:422px;">List for fragment</div>
<div class="lbl" style="left:186.5px;top:422px;">Select together with initial nodes and elements</div><svg width="578" height="443" viewBox="1309 205 578 443" style="left:0;top:0">
<path d="M1324 632.5l3 3.2l5-6.5" fill="none" stroke="#222" stroke-width="1.3"/>
<path d="M1483 632.5l3 3.2l5-6.5" fill="none" stroke="#222" stroke-width="1.3"/>
<path d="M1867 214l10 10M1877 214l-10 10" stroke="#666" stroke-width="1"/>
<rect x="1317.5" y="212.5" width="14" height="12" fill="#e8e8e8" stroke="#999"/><rect x="1319" y="214" width="6" height="9" fill="#3a8f6a"/><rect x="1326" y="214" width="2" height="5" fill="#bbb"/><rect x="1329" y="214" width="1.5" height="5" fill="#bbb"/>
<g transform="translate(1319,239)"><path d="M0 2.500l3-2.500h8v10l-3 2.800h-8z" fill="#1d3f5c"/><rect x="1.3" y="3.8" width="2.600" height="1.600" fill="#fff"/><rect x="1.3" y="6.8" width="2.600" height="1.600" fill="#fff"/><rect x="1.3" y="9.8" width="2.600" height="1.600" fill="#c8ccd4"/><rect x="6.3" y="2" width="2.600" height="1.600" fill="#fff"/><rect x="6.3" y="5" width="2.600" height="1.600" fill="#fff"/><rect x="6.3" y="8" width="2.600" height="1.600" fill="#c8ccd4"/><path d="M5.300 8v2.500q0 2.200 2.500 2.200h1.500" fill="none" stroke="#3b2f7c" stroke-width="1.700"/><path d="M12.100 12.700l-3.400-2.800v5.600z" fill="#3b2f7c"/><path d="M14.500 3.400v11" stroke="#1d3f5c" stroke-width="1.200"/><circle cx="14.500" cy="3.400" r="1.500" fill="#c8d84a" stroke="#5a7a2e" stroke-width=".600"/><circle cx="14.500" cy="14.500" r="1.500" fill="#c8d84a" stroke="#5a7a2e" stroke-width=".600"/></g>
<g transform="translate(1361,241.1)"><rect x="0" y="0" width="9.200" height="6.800" fill="#f0821e"/><rect x="0" y="6.800" width="5.200" height="6" fill="#1d3f5c"/><rect x="1" y="1.2" width="3" height="1" fill="#fff"/><rect x="5" y="1.2" width="3" height="1" fill="#fff"/><rect x="1" y="3.2" width="3" height="1" fill="#fff"/><rect x="5" y="3.2" width="3" height="1" fill="#fff"/><rect x="1" y="5.1" width="3" height="1" fill="#fff"/><rect x="5" y="5.1" width="3" height="1" fill="#fff"/><rect x="1" y="8" width="3" height="1" fill="#fff"/><rect x="1" y="10.3" width="3" height="1" fill="#fff"/><path d="M6.800 7v2.500q0 2.200 2.300 2.200h1" fill="none" stroke="#3b2f7c" stroke-width="1.700"/><path d="M12.600 11.700l-3.400-2.800v5.600z" fill="#3b2f7c"/><path d="M14.500 2.300v12" stroke="#1d3f5c" stroke-width="1.200"/><circle cx="14.500" cy="2.300" r="1.400" fill="#c8d84a" stroke="#5a7a2e" stroke-width=".600"/><circle cx="14.500" cy="8.300" r="1.400" fill="#c8d84a" stroke="#5a7a2e" stroke-width=".600"/><circle cx="14.500" cy="14.400" r="1.400" fill="#c8d84a" stroke="#5a7a2e" stroke-width=".600"/></g>
<path d="M1856 280v13M1849.5 286.5h13" stroke="#3b2f8c" stroke-width="3.6"/><path d="M1854.9 280.5v12" stroke="#7d74c9" stroke-width="1"/>
<path d="M1850 308h9" stroke="#c0272d" stroke-width="2"/><path d="M1848.5 308l4-3v6z" fill="#c0272d"/><path d="M1852 316h9" stroke="#1a7a3c" stroke-width="2"/><path d="M1863 316l-4-3v6z" fill="#1a7a3c"/>
<path d="M1852.0 330.5L1859.0 341.5M1861.0 330.5L1854.0 341.5" stroke="#555" stroke-width="1.1" fill="none"/><ellipse cx="1852.9" cy="343.8" rx="1.8" ry="2.8" transform="rotate(28 1852.9 343.8)" fill="none" stroke="#3a8fc7" stroke-width="1.5"/><ellipse cx="1860.1" cy="343.8" rx="1.8" ry="2.8" transform="rotate(-28 1860.1 343.8)" fill="none" stroke="#3a8fc7" stroke-width="1.5"/>
<path d="M1852.0 451.5L1859.0 462.5M1861.0 451.5L1854.0 462.5" stroke="#555" stroke-width="1.1" fill="none"/><ellipse cx="1852.9" cy="464.8" rx="1.8" ry="2.8" transform="rotate(28 1852.9 464.8)" fill="none" stroke="#3a8fc7" stroke-width="1.5"/><ellipse cx="1860.1" cy="464.8" rx="1.8" ry="2.8" transform="rotate(-28 1860.1 464.8)" fill="none" stroke="#3a8fc7" stroke-width="1.5"/>
<rect x="1850" y="483" width="13" height="9" fill="#f0a23a" stroke="#b06a10" stroke-width=".8"/><rect x="1849" y="481" width="15" height="3.5" fill="#f7c26b" stroke="#b06a10" stroke-width=".8"/><circle cx="1853" cy="479.5" r="1.8" fill="#7ab648"/><circle cx="1857" cy="478.5" r="1.8" fill="#7ab648"/><circle cx="1861" cy="479.8" r="1.8" fill="#7ab648"/>
<path d="M1849 505h15l-6 7.5v6.5l-3 -1v-5.5z" fill="#fff" stroke="#444" stroke-width="1"/><path d="M1850.5 505.8h12l-4.5 5.5h-3z" fill="#d2232a"/>
<path d="M1848 529l1 10l2.5-2.5l2.5 4.5l1.5-.8l-2.3-4.5l3.3-.5z" fill="#222"/><path d="M1854 536h10l-4 4.5v4l-2-.8v-3.2z" fill="#fff" stroke="#333" stroke-width="1"/>
<circle cx="1805" cy="630" r="4.5" fill="none" stroke="#777" stroke-width="2.2" stroke-dasharray="2.2 1.4"/><path d="M1800 632h9" stroke="#c0272d" stroke-width="1.8"/><path d="M1798.5 632l3.5-2.8v5.6z" fill="#c0272d"/><path d="M1802 637.5h8" stroke="#1a7a3c" stroke-width="1.8"/><path d="M1812 637.5l-3.5-2.8v5.6z" fill="#1a7a3c"/>
<text x="1837" y="637.5" font-family="Liberation Serif,serif" font-weight="bold" font-size="15" fill="#3e7d1e">?</text>
<rect x="1883" y="644" width="1.6" height="1.6" fill="#bcbcbc"/>
<rect x="1880" y="644" width="1.6" height="1.6" fill="#bcbcbc"/>
<rect x="1883" y="641" width="1.6" height="1.6" fill="#bcbcbc"/>
<rect x="1877" y="644" width="1.6" height="1.6" fill="#bcbcbc"/>
<rect x="1880" y="641" width="1.6" height="1.6" fill="#bcbcbc"/>
<rect x="1883" y="638" width="1.6" height="1.6" fill="#bcbcbc"/>
</svg></div></div>
<div class="abs" style="left:2px;top:997px;width:1904px;height:1px;background:#e9e9e9"></div>
<div id="btb"></div><div id="bband"></div><div id="status"></div>
<div class="abs" style="left:1358px;top:998px;width:19px;height:47px;background:linear-gradient(#b3b8c0,#8d939d 50%,#5d6470);border-radius:0 3px 3px 0"></div>
<div class="abs" style="left:1829px;top:998px;width:17px;height:47px;background:linear-gradient(#b3b8c0,#8d939d 50%,#5d6470);border-radius:0 3px 3px 0"></div>
<div class="abs" style="left:1884px;top:998px;width:20px;height:47px;background:linear-gradient(#b3b8c0,#8d939d 50%,#5d6470)"></div>
<div class="abs" style="left:1432px;top:1000px;width:42px;height:43px;border-radius:2px;border:1px solid #f3c98a;background:linear-gradient(#fcdcab,#f9ad52 32%,#fab95f 50%,#fcd184 75%,#fdeeb0)"></div>
<div class="abs" style="left:1332px;top:1047px;width:572px;height:22px;background:linear-gradient(#c9ccd1,#b4b8be)"></div>
<div class="abs" style="left:1340px;top:1049px;width:23px;height:19px;background:linear-gradient(#eef0f1,#d3d7da);border:1px solid #aab0b6"></div>
<div class="abs" style="left:1363px;top:1049px;width:24px;height:19px;background:linear-gradient(#eef0f1,#d3d7da);border:1px solid #aab0b6"></div>
<div class="abs" style="left:1387px;top:1049px;width:24px;height:19px;background:linear-gradient(#eef0f1,#d3d7da);border:1px solid #aab0b6"></div>
<div class="abs" style="left:1474px;top:1049px;width:23px;height:19px;background:linear-gradient(#eef0f1,#d3d7da);border:1px solid #aab0b6"></div>
<div class="abs" style="left:1413px;top:1049px;width:54px;height:19px;background:#eef0f1;border:1px solid #b0b5ba;font-size:12px;line-height:18px;padding-left:3px;color:#101020">1.</div>
<div class="abs" style="left:1498px;top:1049px;width:54px;height:19px;background:#eef0f1;border:1px solid #b0b5ba;font-size:12px;line-height:18px;padding-left:3px;color:#101020">1.</div>
<div class="abs" style="left:1469px;top:1048px;width:2px;height:20px;background:#5e636b"></div>
<div class="abs" style="left:1553px;top:1048px;width:2px;height:20px;background:#5e636b"></div>
<div class="abs" style="left:1689px;top:1048px;width:2px;height:20px;background:#5e636b"></div>
<div class="abs" style="left:1822px;top:1048px;width:2px;height:20px;background:#5e636b"></div>
<div class="abs" style="left:1560px;top:1052px;font-size:12px;letter-spacing:-0.35px;line-height:15px;color:#14142a;white-space:nowrap">Node: 218 / 104721</div>
<div class="abs" style="left:1693px;top:1052px;font-size:12px;letter-spacing:-0.35px;line-height:15px;color:#14142a;white-space:nowrap">El.: 1519 / 104030</div>
<div class="abs" style="left:1828px;top:1052px;font-size:12px;letter-spacing:-0.35px;line-height:15px;color:#14142a;white-space:nowrap">L.case.: 1 / 3</div>
<svg width="1906" height="81" viewBox="0 990 1906 81" style="left:0;top:990px">
<path d="M9 1006v32" stroke="#222" stroke-width="2" stroke-dasharray="1.6 1.6"/><path d="M10.5 1007v32" stroke="#fff" stroke-width="1" stroke-dasharray="1.6 1.6" opacity=".7"/>
<path d="M1382 1006v32" stroke="#222" stroke-width="2" stroke-dasharray="1.6 1.6"/><path d="M1383.5 1007v32" stroke="#fff" stroke-width="1" stroke-dasharray="1.6 1.6" opacity=".7"/>
<path d="M1853 1006v32" stroke="#222" stroke-width="2" stroke-dasharray="1.6 1.6"/><path d="M1854.5 1007v32" stroke="#fff" stroke-width="1" stroke-dasharray="1.6 1.6" opacity=".7"/>
<path d="M105 1019.5h10l-5 5z" fill="#4a4a4a"/><path d="M105 1019h10" stroke="#777" stroke-width="1"/>
<path d="M215 1019.5h10l-5 5z" fill="#4a4a4a"/><path d="M215 1019h10" stroke="#777" stroke-width="1"/>
<path d="M413 1019.5h10l-5 5z" fill="#4a4a4a"/><path d="M413 1019h10" stroke="#777" stroke-width="1"/>
<path d="M479 1019.5h10l-5 5z" fill="#4a4a4a"/><path d="M479 1019h10" stroke="#777" stroke-width="1"/>
<path d="M545 1019.5h10l-5 5z" fill="#4a4a4a"/><path d="M545 1019h10" stroke="#777" stroke-width="1"/>
<path d="M1251 1019.5h10l-5 5z" fill="#4a4a4a"/><path d="M1251 1019h10" stroke="#777" stroke-width="1"/>
<path d="M1525 1019.5h10l-5 5z" fill="#4a4a4a"/><path d="M1525 1019h10" stroke="#777" stroke-width="1"/>
<path d="M1591 1019.5h10l-5 5z" fill="#4a4a4a"/><path d="M1591 1019h10" stroke="#777" stroke-width="1"/>
<path d="M1657 1019.5h10l-5 5z" fill="#4a4a4a"/><path d="M1657 1019h10" stroke="#777" stroke-width="1"/>
<path d="M1768 1019.5h10l-5 5z" fill="#4a4a4a"/><path d="M1768 1019h10" stroke="#777" stroke-width="1"/>
<path d="M1456 1057.5h6l-3 3.5z" fill="#444"/>
<path d="M1541 1057.5h6l-3 3.5z" fill="#444"/>
<path d="M784 1006v30" stroke="#7a7f86" stroke-width="1"/><path d="M785 1006v30" stroke="#eee" stroke-width="1"/>
<path d="M1056 1006v30" stroke="#7a7f86" stroke-width="1"/><path d="M1057 1006v30" stroke="#eee" stroke-width="1"/>
<path d="M1153 1006v30" stroke="#7a7f86" stroke-width="1"/><path d="M1154 1006v30" stroke="#eee" stroke-width="1"/>
<path d="M1363 1031.5h8" stroke="#fff" stroke-width="1.3"/><path d="M1362.5 1035h9l-4.5 4.5z" fill="#fff"/>
<path d="M1834 1031.5h8" stroke="#fff" stroke-width="1.3"/><path d="M1833.5 1035h9l-4.5 4.5z" fill="#fff"/>
<path d="M1890 1031.5h8" stroke="#fff" stroke-width="1.3"/><path d="M1889.5 1035h9l-4.5 4.5z" fill="#fff"/>
<path d="M1888 1007l3 3l-3 3M1893 1007l3 3l-3 3" stroke="#fff" stroke-width="1.5" fill="none"/>
<g transform="translate(33,1022)"><path d="M-5.500 -9.500l6.500 3.500l6-3l2 8l5 4l-7 3l-3 6.500l-7-4.500l-9 1.500l5-6.500z" fill="none" stroke="#d07a7a" stroke-width="1.200" stroke-dasharray="3 1.800"/></g>
<g transform="translate(78,1022)"><circle cx="11.800" cy="11.800" r="2" fill="#eceef0"/><circle cx="0" cy="0" r="14.500" fill="#f6f8fa" stroke="#9ea4ad" stroke-width="1"/><circle cx="0" cy="-0.300" r="12.800" fill="url(#glens)" stroke="#5f8fd0" stroke-width="1.100"/><clipPath id="lc"><circle cx="0" cy="-0.300" r="12.300"/></clipPath><g clip-path="url(#lc)"><path d="M-13 0h26M0 -13v26" stroke="#1d4663" stroke-width="2.600"/><circle cx="0" cy="0" r="4.500" fill="url(#gnode)" stroke="#5a8a3a" stroke-width=".800"/></g><ellipse cx="0" cy="-6" rx="10" ry="5.500" fill="#fff" opacity=".250"/></g>
<g transform="translate(143,1022)"><path d="M-12 -10.500h12M-12 2.500h12M-12 -10.500v23M0 2.500v10M12 2.500v10" stroke="#1d4663" stroke-width="1.500" fill="none"/><path d="M0 -10.500h12v13h-12z" fill="none" stroke="#e01020" stroke-width="1.800"/><circle cx="-12" cy="-10.5" r="2" fill="#c8dc6a" stroke="#4a7a3a" stroke-width=".700"/><circle cx="-12" cy="2.5" r="2" fill="#c8dc6a" stroke="#4a7a3a" stroke-width=".700"/><circle cx="0" cy="-10.5" r="2.400" fill="#fff" stroke="#e01020" stroke-width="1.400"/><circle cx="12" cy="-10.5" r="2.400" fill="#fff" stroke="#e01020" stroke-width="1.400"/><circle cx="0" cy="2.5" r="2.400" fill="#fff" stroke="#e01020" stroke-width="1.400"/><circle cx="12" cy="2.5" r="2.400" fill="#fff" stroke="#e01020" stroke-width="1.400"/></g>
<g transform="translate(188,1022)"><circle cx="11.800" cy="11.800" r="2" fill="#eceef0"/><circle cx="0" cy="0" r="14.500" fill="#f6f8fa" stroke="#9ea4ad" stroke-width="1"/><circle cx="0" cy="-0.300" r="12.800" fill="url(#glens)" stroke="#5f8fd0" stroke-width="1.100"/><clipPath id="lc"><circle cx="0" cy="-0.300" r="12.300"/></clipPath><g clip-path="url(#lc)"><path d="M-9 0h18" stroke="#1d4663" stroke-width="2.600"/><circle cx="-9.500" cy="0" r="3.300" fill="url(#gnode)" stroke="#5a8a3a" stroke-width=".700"/><circle cx="9.500" cy="0" r="3.300" fill="url(#gnode)" stroke="#5a8a3a" stroke-width=".700"/></g><ellipse cx="0" cy="-6" rx="10" ry="5.500" fill="#fff" opacity=".250"/></g>
<g transform="translate(253,1022)"><circle cx="11.800" cy="11.800" r="2" fill="#eceef0"/><circle cx="0" cy="0" r="14.500" fill="#f6f8fa" stroke="#9ea4ad" stroke-width="1"/><circle cx="0" cy="-0.300" r="12.800" fill="url(#glens)" stroke="#5f8fd0" stroke-width="1.100"/><clipPath id="lc"><circle cx="0" cy="-0.300" r="12.300"/></clipPath><g clip-path="url(#lc)"><path d="M-3.500 -13v26M3.500 -13v26" stroke="#1d4663" stroke-width="3"/></g><ellipse cx="0" cy="-6" rx="10" ry="5.500" fill="#fff" opacity=".250"/></g>
<g transform="translate(297,1022)"><circle cx="11.800" cy="11.800" r="2" fill="#eceef0"/><circle cx="0" cy="0" r="14.500" fill="#f6f8fa" stroke="#9ea4ad" stroke-width="1"/><circle cx="0" cy="-0.300" r="12.800" fill="url(#glens)" stroke="#5f8fd0" stroke-width="1.100"/><clipPath id="lc"><circle cx="0" cy="-0.300" r="12.300"/></clipPath><g clip-path="url(#lc)"><path d="M-13 -3.500h26M-13 3.500h26" stroke="#1d4663" stroke-width="3"/></g><ellipse cx="0" cy="-6" rx="10" ry="5.500" fill="#fff" opacity=".250"/></g>
<g transform="translate(341,1022)"><circle cx="11.800" cy="11.800" r="2" fill="#eceef0"/><circle cx="0" cy="0" r="14.500" fill="#f6f8fa" stroke="#9ea4ad" stroke-width="1"/><circle cx="0" cy="-0.300" r="12.800" fill="url(#glens)" stroke="#5f8fd0" stroke-width="1.100"/><clipPath id="lc"><circle cx="0" cy="-0.300" r="12.300"/></clipPath><g clip-path="url(#lc)"><path d="M0 -13v13M-13 0h26M0 0l-10 10" stroke="#1d4663" stroke-width="2.600"/><circle cx="0" cy="0" r="4.200" fill="url(#gnode)" stroke="#5a8a3a" stroke-width=".800"/></g><ellipse cx="0" cy="-6" rx="10" ry="5.500" fill="#fff" opacity=".250"/></g>
<g transform="translate(386,1022)"><circle cx="11.800" cy="11.800" r="2" fill="#eceef0"/><circle cx="0" cy="0" r="14.500" fill="#f6f8fa" stroke="#9ea4ad" stroke-width="1"/><circle cx="0" cy="-0.300" r="12.800" fill="url(#glens)" stroke="#5f8fd0" stroke-width="1.100"/><clipPath id="lc"><circle cx="0" cy="-0.300" r="12.300"/></clipPath><g clip-path="url(#lc)"><path d="M-4.500 -13v26M5 -13v26M-13 -4.500h26M-13 5h26" stroke="#1d4663" stroke-width="2.300"/></g><ellipse cx="0" cy="-6" rx="10" ry="5.500" fill="#fff" opacity=".250"/></g>
<g transform="translate(452,1022)"><circle cx="11.800" cy="11.800" r="2" fill="#eceef0"/><circle cx="0" cy="0" r="14.500" fill="#f6f8fa" stroke="#9ea4ad" stroke-width="1"/><circle cx="0" cy="-0.300" r="12.800" fill="url(#glens)" stroke="#5f8fd0" stroke-width="1.100"/><clipPath id="lc"><circle cx="0" cy="-0.300" r="12.300"/></clipPath><g clip-path="url(#lc)"><text x="0" y="8" text-anchor="middle" font-family="Liberation Sans,sans-serif" font-size="22" textLength="23" lengthAdjust="spacingAndGlyphs" fill="#34306a">EF</text></g><ellipse cx="0" cy="-6" rx="10" ry="5.500" fill="#fff" opacity=".250"/></g>
<g transform="translate(518,1022)"><circle cx="11.800" cy="11.800" r="2" fill="#eceef0"/><circle cx="0" cy="0" r="14.500" fill="#f6f8fa" stroke="#9ea4ad" stroke-width="1"/><circle cx="0" cy="-0.300" r="12.800" fill="url(#glens)" stroke="#5f8fd0" stroke-width="1.100"/><clipPath id="lc"><circle cx="0" cy="-0.300" r="12.300"/></clipPath><g clip-path="url(#lc)"><path d="M-9 -9.500l8 8.500" stroke="#1d4663" stroke-width="3.200"/><path d="M-1 -1l4.500 4.800" stroke="#d81e2a" stroke-width="3.200"/><path d="M3.500 3.800l5 5.200" stroke="#e8d010" stroke-width="3.200"/><path d="M-10 -8.500l18.500 19.500" stroke="#1d4663" stroke-width=".800"/></g><ellipse cx="0" cy="-6" rx="10" ry="5.500" fill="#fff" opacity=".250"/></g>
<g transform="translate(582,1022)"><path d="M-13 8l11-7h17.500l-9.500 7z" fill="#cad48a" stroke="#8a9a4a" stroke-width=".600"/><path d="M-13 8h19v4.600h-19z" fill="#b0bc6a" stroke="#8a9a4a" stroke-width=".600"/><path d="M6 8l9.500-7v4l-9.500 7.600z" fill="#96a454"/><path d="M-10 -8.500l6-4v17l-6 4z" fill="#8a9ac8" stroke="#2a3a7a" stroke-width=".700"/><path d="M-13 -5.500l3-3v17l-3 1z" fill="#5a6aa8" stroke="#2a3a7a" stroke-width=".600"/><path d="M-7.500 -10v16.500M-5.800 -11v16.500" stroke="#dde4f4" stroke-width=".700"/><path d="M4.300 -3l1.500-1.500h2.500v13l-1.500 1.500h-2.500z" fill="#d83050" stroke="#9a1a30" stroke-width=".500"/></g>
<g transform="translate(626,1022)"><defs><linearGradient id="gfun" x1="0" x2="1"><stop offset="0" stop-color="#86a4ae"/><stop offset=".45" stop-color="#eef6f8"/><stop offset="1" stop-color="#7a98a4"/></linearGradient></defs><path d="M-14.300 -12.400h29l-11.700 13v9.800l-5.200 1.300v-11.100z" fill="url(#gfun)" stroke="#5a6a72" stroke-width="1"/><path d="M-13 -11.500h26" stroke="#dfeaee" stroke-width="1.400"/></g>
<g transform="translate(671,1022)"><g opacity="1"><rect x="-11" y="-13.2" width="12" height="12.5" fill="none" stroke="#1a5ad0" stroke-width="1.8"/><path d="M-11.9 -0.6999999999999993h13.800" stroke="#2a2a7a" stroke-width="1.500"/><rect x="-11" y="0.3000000000000007" width="12" height="12.5" fill="none" stroke="#d8106a" stroke-width="1.8"/></g><path d="M7.500 -8.500Q20 -0.500 7.500 7.500" fill="none" stroke="#2f9a3a" stroke-width="1.300"/><path d="M4 -9.500l6-1.800l-1.800 5.600z" fill="#2f9a3a"/><path d="M4 8.500l6 1.800l-1.800-5.600z" fill="#2f9a3a"/></g>
<g transform="translate(715,1022)"><path d="M0 -4h11.500M0 6h11.500M-12 6v8.500M0 6v8.500M11.500 -4v18.500" stroke="#8a90a8" stroke-width="1.500" fill="none"/><path d="M-12 -4h12v10h-12z" fill="none" stroke="#e08a8a" stroke-width="1.800"/><circle cx="-12" cy="-4" r="2" fill="#f4d0d0" stroke="#e08a8a" stroke-width="1"/><circle cx="0" cy="-4" r="2" fill="#f4d0d0" stroke="#e08a8a" stroke-width="1"/><circle cx="-12" cy="6" r="2" fill="#f4d0d0" stroke="#e08a8a" stroke-width="1"/><circle cx="0" cy="6" r="2" fill="#f4d0d0" stroke="#e08a8a" stroke-width="1"/><circle cx="11.5" cy="-4" r="1.800" fill="#c8dcb0" stroke="#9ab08a" stroke-width=".700"/><circle cx="11.5" cy="6" r="1.800" fill="#c8dcb0" stroke="#9ab08a" stroke-width=".700"/><path d="M-2 -6q0-7 6.500-7q6 0 6 6" fill="none" stroke="#e88a8a" stroke-width="2.200"/><path d="M-6 -3h8l-4 5.500z" fill="#d87a7a"/></g>
<g transform="translate(759,1022)"><path d="M-1.800 -13.500q2-1.300 4 0l.900 12.500h-5.800z" fill="#2f9a3a" stroke="#1a6a24" stroke-width=".700"/><path d="M-1.300 -12.500v10.500" stroke="#8ad08a" stroke-width="1"/><rect x="-5.300" y="-1" width="10.800" height="3" fill="#3a3a3a"/><path d="M-5.300 0.300h10.800" stroke="#c0c0c0" stroke-width=".700"/><path d="M-5.300 2l-3.200 10.500h15l-1-10.500z" fill="#e0e4c8"/><path d="M-4 2.500l-2.500 9.500M-1.500 2.500l-1 9.500M1 2.500l.500 9.500M3.500 2.500l1.500 9.500" stroke="#a8b090" stroke-width=".700"/><path d="M-16 12.500h12" stroke="#f4f4f4" stroke-width="1"/></g>
<g transform="translate(810,1022)"><g opacity="1"><rect x="-5.6" y="-13.2" width="12" height="12.5" fill="none" stroke="#1a5ad0" stroke-width="1.8"/><path d="M-6.5 -0.6999999999999993h13.800" stroke="#2a2a7a" stroke-width="1.500"/><rect x="-5.6" y="0.3000000000000007" width="12" height="12.5" fill="none" stroke="#d8106a" stroke-width="1.8"/></g><path d="M-9 -14.500l15.500 14M6.500 -14.500l-15.500 14" stroke="#2a7a3a" stroke-width="1"/></g>
<g transform="translate(854,1022)"><path d="M-13 -8v21.500h21" fill="none" stroke="#9a9a9a" stroke-width="1.200"/><path d="M-15.500 -5.500l2.500-5l2.500 5zM6 11l5 2.500l-5 2.500z" fill="#9a9a9a"/><g opacity=".5"><rect x="-1" y="-11.5" width="8.5" height="9" fill="none" stroke="#6aa0d8" stroke-width="1.5"/><rect x="-1" y="-1" width="8.5" height="9" fill="none" stroke="#e06a9a" stroke-width="1.5"/><path d="M-3 -12.500l12 10M9 -12.500l-12 10" stroke="#6a9a6a" stroke-width=".800"/></g></g>
<g transform="translate(898,1022)"><g opacity="1"><rect x="-5.6" y="-13.2" width="12" height="12.5" fill="none" stroke="#1a5ad0" stroke-width="1.8"/><path d="M-6.5 -0.6999999999999993h13.800" stroke="#2a2a7a" stroke-width="1.500"/><rect x="-5.6" y="0.3000000000000007" width="12" height="12.5" fill="none" stroke="#d8106a" stroke-width="1.8"/></g><path d="M-9 -0.500l15.500 14M6.500 -0.500l-15.500 14" stroke="#2a7a3a" stroke-width="1"/></g>
<g transform="translate(942,1022)"><rect x="0.5" y="-0.5" width="9.5" height="10.5" fill="none" stroke="#d8106a" stroke-width="1.7"/><g opacity=".6"><rect x="-2" y="-12.5" width="10" height="9.5" fill="none" stroke="#6a9ac8" stroke-width="1.3"/><path d="M-4 -14l14 11.500M10 -14l-14 11.500" stroke="#3a8a4a" stroke-width=".800"/></g><path d="M-8 4v-7q0-7 8-7h3" fill="none" stroke="#2a2a8a" stroke-width="2.400"/><path d="M-12.500 2.500h9l-4.500 5.500z" fill="#2a2a8a"/></g>
<g transform="translate(987,1022)"><g opacity="1" fill="none" stroke="#5a648a" stroke-width="1.500" transform="translate(1.500,0.500) scale(1.220)"><path d="M-10.500 13v-19.500h12.500v19.500M-10.500 -6.500l6-5.500h12.500l-6 5.500M8 -12v19l-6 5M-4.500 -12v6M-10.500 3h12.500l6-5.500M-4.500 -2.500h12.500M-4.500 -2.500v10"/></g></g>
<g transform="translate(1030,1022)"><g opacity="1" fill="none" stroke="#7a8a9a" stroke-width="1.500" transform="translate(1.500,0.500) scale(1.220)"><path d="M-10.500 13v-19.500h12.500v19.500M-10.500 -6.500l6-5.500h12.500l-6 5.500M8 -12v19l-6 5M-4.500 -12v6M-10.500 3h12.500l6-5.500M-4.500 -2.500h12.500M-4.500 -2.500v10"/></g><g transform="translate(1.500,0.500) scale(1.220)"><path d="M-10.500 -1l6-5h12.500l-6 5z" fill="#f0a0a0" opacity=".7"/><path d="M-10.500 -6.500h12.500l6-5.500M-10.500 -1h12.500l6-5M-10.500 -6.500v5.500M2 -6.500v5.500M8 -12v6" fill="none" stroke="#e02a1e" stroke-width="1.500"/></g></g>
<g transform="translate(1083,1022)"><path d="M3 3l9.500 9.500" stroke="#1a1a1a" stroke-width="3.600" stroke-linecap="round"/><path d="M3 3l4 4" stroke="#8a8a8a" stroke-width="2.500"/><circle cx="-3.500" cy="-3.500" r="8.300" fill="#cfe4fa" stroke="#7a8ea8" stroke-width="1.600"/><ellipse cx="-4.500" cy="-6" rx="5" ry="3.500" fill="#fff" opacity=".700"/></g>
<g transform="translate(1127,1022)"><path d="M3 3l9.500 9.500" stroke="#1a1a1a" stroke-width="3.600" stroke-linecap="round"/><path d="M3 3l4 4" stroke="#8a8a8a" stroke-width="2.500"/><circle cx="-3.500" cy="-3.500" r="8.300" fill="#cfe4fa" stroke="#7a8ea8" stroke-width="1.600"/><ellipse cx="-4.500" cy="-6" rx="5" ry="3.500" fill="#fff" opacity=".700"/><path d="M-3 -8.500l9.500 9.500M6.500 -8.500l-9.500 9.500" stroke="#e01818" stroke-width="3"/></g>
<g transform="translate(1178,1022)"><defs><radialGradient id="gfl" cx=".6" cy=".7" r=".6"><stop offset="0" stop-color="#fffbd0"/><stop offset=".6" stop-color="#f8e020"/><stop offset="1" stop-color="#f08010"/></radialGradient></defs><path d="M-13 -10l4.500-3.500l9.500 11.500l-6 5z" fill="#5a5a5a" stroke="#2a2a2a" stroke-width=".700"/><path d="M-11 -11l9 11" stroke="#a0a0a0" stroke-width="1.400"/><path d="M-6.500 2.500l8-6.500l5 2.500l-9 9.500z" fill="#d83a20" stroke="#8a1a10" stroke-width=".600"/><path d="M-2.500 8l9-9.500l6.500 4v10.500h-12z" fill="url(#gfl)"/></g>
<g transform="translate(1225,1022)"><text x="0" y="1" text-anchor="middle" font-family="Liberation Serif,serif" font-style="italic" font-weight="bold" font-size="17" fill="#2a2a4a">L</text><path d="M-10 6.500h21" stroke="#5a7ac8" stroke-width="1.200" stroke-dasharray="1.500 1.500"/><circle cx="-11.500" cy="6.500" r="2.100" fill="#c8e08a" stroke="#3a8a3a" stroke-width=".800"/><circle cx="12.500" cy="6.500" r="2.100" fill="#c8e08a" stroke="#3a8a3a" stroke-width=".800"/></g>
<g transform="translate(1289,1022)"><path d="M-10.5 11.0L-4.3 8.5L-8.3 4.7z" fill="#e8c9a0" stroke="#a07a4a" stroke-width=".4"/><path d="M-10.5 11.0L-8.3 10.1L-9.7 8.8z" fill="#333"/><path d="M-4.3 8.5L9.6 -6.0L5.6 -9.8L-8.3 4.7z" fill="#f5a818" stroke="#b87808" stroke-width=".4"/><path d="M-6.3 6.6L7.6 -7.9" stroke="#ffe27a" stroke-width="1.6"/><path d="M9.6 -6.0L11.1 -7.6L7.1 -11.4L5.6 -9.8z" fill="#c8c8c8"/><path d="M11.1 -7.6L13.0 -9.6L9.0 -13.4L7.1 -11.4z" fill="#e86a5a"/></g>
<g transform="translate(1333,1022)"><path d="M-12.500 -12v24" stroke="#b0b0b0" stroke-width="1.600"/><path d="M-12 -12q6-3.500 11 0t12-.500l-2.500 14.500q-6 3-11-.500t-9.500 .500z" fill="url(#gflag)" stroke="#a01010" stroke-width=".500"/><path d="M-9.5 13.5L-3.8 11.4L-7.3 7.9z" fill="#e8c9a0" stroke="#a07a4a" stroke-width=".4"/><path d="M-9.5 13.5L-7.5 12.8L-8.7 11.5z" fill="#333"/><path d="M-3.8 11.4L9.5 -1.6L6.0 -5.1L-7.3 7.9z" fill="#f5a818" stroke="#b87808" stroke-width=".4"/><path d="M-5.6 9.7L7.8 -3.4" stroke="#ffe27a" stroke-width="1.5"/><path d="M9.5 -1.6L11.0 -3.0L7.5 -6.5L6.0 -5.1z" fill="#c8c8c8"/><path d="M11.0 -3.0L12.7 -4.7L9.3 -8.3L7.5 -6.5z" fill="#e86a5a"/></g>
<g transform="translate(1406,1022)"><path d="M-9.3 13.6L-9.3 -8.5" stroke="#e01828" stroke-width="1.5"/><path d="M-9.3 -15L-6.4 -8.5L-12.2 -8.5z" fill="#e01828"/><path d="M-9.3 13.6L12.5 13.6" stroke="#10983a" stroke-width="1.5"/><path d="M19 13.6L12.5 16.5L12.5 10.7z" fill="#10983a"/><path d="M-9.3 13.6L5.9 -1.9" stroke="#2a2a9a" stroke-width="1.5"/><path d="M10.5 -6.5L8.0 0.2L3.9 -3.9z" fill="#2a2a9a"/></g>
<g transform="translate(1452,1022)"><path d="M1.5 12L1.5 -6.5" stroke="#c81e1e" stroke-width="1.5"/><path d="M1.5 -12.5L4.2 -6.5L-1.2 -6.5z" fill="#c81e1e"/><path d="M1.5 12L-8.6 7.0" stroke="#2a2a9a" stroke-width="1.5"/><path d="M-14 4.3L-7.4 4.6L-9.8 9.4z" fill="#2a2a9a"/><path d="M1.5 12L11.6 7.0" stroke="#10983a" stroke-width="1.5"/><path d="M17 4.3L12.8 9.4L10.4 4.6z" fill="#10983a"/><text x="-14.500" y="2" font-family="Liberation Sans,sans-serif" font-size="9" fill="#222">Y</text><text x="4.500" y="-7" font-family="Liberation Sans,sans-serif" font-size="9" fill="#222">Z</text><text x="10.500" y="2" font-family="Liberation Sans,sans-serif" font-size="9" fill="#222">X</text></g>
<g transform="translate(1497,1022)"><path d="M-11.4 12.9L-11.4 -8.5" stroke="#e01828" stroke-width="1.5"/><path d="M-11.4 -15L-8.5 -8.5L-14.3 -8.5z" fill="#e01828"/><path d="M-11.4 12.9L10.7 12.9" stroke="#10983a" stroke-width="1.5"/><path d="M17.2 12.9L10.7 15.8L10.7 10.0z" fill="#10983a"/><circle cx="-11.400" cy="12.900" r="1.900" fill="#2a2a9a"/><text x="-6.200" y="4" font-family="Liberation Sans,sans-serif" font-size="11.800" fill="#444" textLength="16.500" lengthAdjust="spacingAndGlyphs">XZ</text></g>
<g transform="translate(1563,1022)"><path d="M-11.4 12.9L-11.4 -8.5" stroke="#2a2a9a" stroke-width="1.5"/><path d="M-11.4 -15L-8.5 -8.5L-14.3 -8.5z" fill="#2a2a9a"/><path d="M-11.4 12.9L10.7 12.9" stroke="#10983a" stroke-width="1.5"/><path d="M17.2 12.9L10.7 15.8L10.7 10.0z" fill="#10983a"/><circle cx="-11.400" cy="12.900" r="1.900" fill="#e01828"/><text x="-6.200" y="4" font-family="Liberation Sans,sans-serif" font-size="11.800" fill="#444" textLength="16.500" lengthAdjust="spacingAndGlyphs">XY</text></g>
<g transform="translate(1629,1022)"><path d="M-11.4 12.9L-11.4 -8.5" stroke="#e01828" stroke-width="1.5"/><path d="M-11.4 -15L-8.5 -8.5L-14.3 -8.5z" fill="#e01828"/><path d="M-11.4 12.9L10.7 12.9" stroke="#2a2a9a" stroke-width="1.5"/><path d="M17.2 12.9L10.7 15.8L10.7 10.0z" fill="#2a2a9a"/><circle cx="-11.400" cy="12.900" r="1.900" fill="#10983a"/><text x="-6.200" y="4" font-family="Liberation Sans,sans-serif" font-size="11.800" fill="#444" textLength="16.500" lengthAdjust="spacingAndGlyphs">YZ</text></g>
<g transform="translate(1695,1022)"><path d="M-14.500 9l6.500-19.500h23l-6.500 19.500z" fill="#d4e6f4" opacity=".900"/><path d="M-11 6.500l7-13.500M-4 6.500l7-13.500M3.500 6.500l7-13.500M-6.500 -3h19M-9.500 2h16.500" stroke="#2a3a6a" stroke-width="1.500" fill="none"/><path d="M-4.500 -7h15" stroke="#2a3a6a" stroke-width="1.500"/></g>
<g transform="translate(1741,1022)"><path d="M-7.500 -7A11 11 0 1 0 3 -10.600" fill="none" stroke="#2a3a7a" stroke-width="2.400"/><path d="M3 -10.600A11 11 0 0 1 10.500 -3" fill="none" stroke="#9aa6c8" stroke-width="1.600"/><path d="M-13.500 -8.500l9.500-2.500l-3 8.500z" fill="#2a3a7a"/></g>
<g transform="translate(1803,1022)"><path d="M-11.5 13.6L-11.5 -8.5" stroke="#e01828" stroke-width="1.5"/><path d="M-11.5 -15L-8.6 -8.5L-14.4 -8.5z" fill="#e01828"/><path d="M-11.5 13.6L10.0 13.6" stroke="#e01828" stroke-width="1.5"/><path d="M16.5 13.6L10.0 16.5L10.0 10.7z" fill="#e01828"/><path d="M-11.5 13.6L3.9 -1.9" stroke="#e01828" stroke-width="1.5"/><path d="M8.5 -6.5L6.0 0.2L1.8 -4.0z" fill="#e01828"/></g>
<g transform="translate(1351,1058.5)"><path d="M-8 -4l4.500-3.500v2.200h4q4 0 4 4.500v1.500h-2.500v-1.500q0-1.800-1.800-1.800h-3.700v2.200z" fill="#4f9a4f" stroke="#2a6a2a" stroke-width=".400"/><path d="M-6.5 6.5L-2.7 4.9L-5.2 2.6z" fill="#e8c9a0" stroke="#a07a4a" stroke-width=".4"/><path d="M-6.5 6.5L-5.2 5.9L-6.0 5.1z" fill="#333"/><path d="M-2.7 4.9L4.7 -3.1L2.2 -5.4L-5.2 2.6z" fill="#f5a818" stroke="#b87808" stroke-width=".4"/><path d="M-4.0 3.8L3.4 -4.3" stroke="#ffe27a" stroke-width="1.0"/><path d="M4.7 -3.1L5.6 -4.1L3.1 -6.4L2.2 -5.4z" fill="#c8c8c8"/><path d="M5.6 -4.1L6.7 -5.3L4.3 -7.7L3.1 -6.4z" fill="#e86a5a"/><text x="-1" y="8" font-family="Liberation Sans,sans-serif" font-size="11" fill="#3a3a5a">№</text></g>
<g transform="translate(1375,1058.5)"><path d="M-5.500 4h11l-5.500-8.500z" fill="url(#ggreenarr)" stroke="#2a6a2a" stroke-width=".700"/></g>
<g transform="translate(1399,1058.5)"><path d="M-6.500 -3.500h13l-3 6.500h-7z" fill="#a4a8ac"/></g>
<g transform="translate(1485,1058.5)"><path d="M-7 7l9-11.500l2.200 1.700l-8.700 11.800a1.500 1.500 0 0 1 -2.500 -2z" fill="url(#ggold)" stroke="#a07008" stroke-width=".400"/><path d="M-2.500 -7.500q4.500-2 8 .500l3 2l-1.500 2.500l-2.500-1.500l-2.500 1.500l-2-2l1.500-1.500q-1.500-1.500-3.500-1.500z" fill="url(#gsteel)" stroke="#6a7078" stroke-width=".500"/></g>
</svg>
</div>
</body></html>
